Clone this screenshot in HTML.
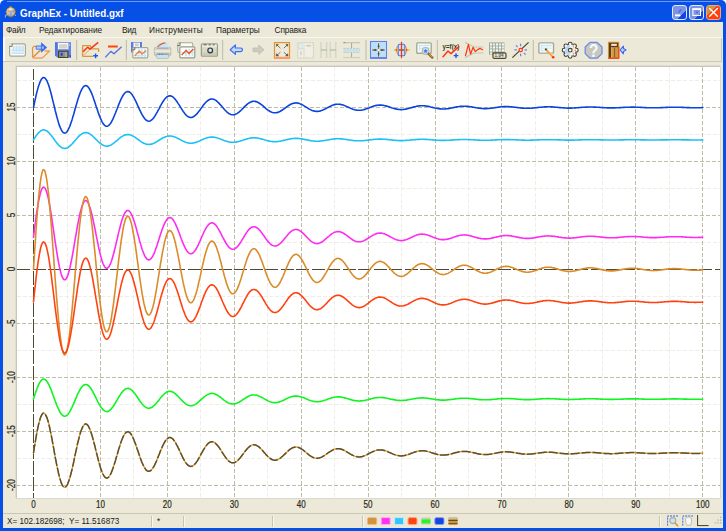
<!DOCTYPE html>
<html><head><meta charset="utf-8"><title>GraphEx - Untitled.gxf</title>
<style>
html,body{margin:0;padding:0;background:#fff;}
body{width:726px;height:531px;position:relative;overflow:hidden;font-family:"Liberation Sans",sans-serif;}
#win{position:absolute;left:0;top:0;width:726px;height:531px;background:#0650e8;border-radius:5px 5px 0 0;overflow:hidden;}
#hl{position:absolute;left:7px;right:7px;top:1px;height:1px;background:#6c9af4;}
#title{position:absolute;left:19.6px;top:5.5px;font-weight:bold;font-size:10.5px;line-height:14px;transform:scaleX(0.935);transform-origin:0 0;color:#fffdf4;white-space:nowrap;}
#client{position:absolute;left:3px;top:22px;width:720px;height:506px;background:#ece9d8;}
#menu span{position:absolute;top:25px;font-size:8.3px;line-height:10px;color:#1a1a1a;white-space:nowrap;}
.hline{position:absolute;left:3px;width:720px;height:1px;}
.btn{position:absolute;top:5px;width:15px;height:15px;border-radius:3px;box-sizing:border-box;}
#status{position:absolute;left:3px;top:513px;width:720px;height:15px;background:#ebe8d7;border-top:1px solid #c9c6b6;box-sizing:border-box;}
#status .t{position:absolute;left:4px;top:3px;font-size:8.15px;line-height:10px;color:#1a1a1a;white-space:pre;}
.sep{position:absolute;top:2px;width:1px;height:11px;background:#c8c5b5;border-right:1px solid #f7f6ef;}
</style></head><body>
<div id="win">
<div id="hl"></div>
<div id="title">GraphEx - Untitled.gxf</div>
<div class="btn" style="left:672px;background:linear-gradient(135deg,#7e92e6 0 66%,#1243e6 66%);border:1px solid #e4e9f6"></div>
<div class="btn" style="left:689px;background:linear-gradient(135deg,#7e92e6 0 66%,#1243e6 66%);border:1px solid #e4e9f6"></div>
<div class="btn" style="left:706px;background:linear-gradient(135deg,#d0943c 0 38%,#ff3f0c 38%);border:1px solid #f6a27c"></div>
<div id="client"></div>
<div id="menu"><span style="left:6px;letter-spacing:-0.25px">Файл</span><span style="left:39px;letter-spacing:0px">Редактирование</span><span style="left:122px;letter-spacing:-0.3px">Вид</span><span style="left:149px;letter-spacing:0.2px">Инструменты</span><span style="left:216px;letter-spacing:-0.05px">Параметры</span><span style="left:274.6px;letter-spacing:-0.15px">Справка</span></div>
<div class="hline" style="top:37px;background:#f8f7f0"></div>
<div class="hline" style="top:61px;background:#cbc8b4;width:719px"></div><div style="position:absolute;left:721px;top:38px;width:1px;height:24px;background:#cbc8b4"></div>

<div style="position:absolute;left:3px;top:38px;width:2px;height:23px;background:#fbfaf6"></div>
<svg id="plot" width="726" height="531" viewBox="0 0 726 531" style="position:absolute;left:0;top:0">
<rect x="16" y="66" width="705" height="433" fill="#dcd9cc"/>
<rect x="15" y="65" width="705" height="433" fill="#e0ddd0"/>
<rect x="16" y="66" width="704" height="432" fill="#c9c6ba"/>
<rect x="17" y="67" width="703" height="431" fill="#fff"/>
<g stroke="#f0ede5" stroke-width="1" stroke-dasharray="4 2" shape-rendering="crispEdges">
<line x1="67.0" y1="67" x2="67.0" y2="498"/>
<line x1="133.9" y1="67" x2="133.9" y2="498"/>
<line x1="200.8" y1="67" x2="200.8" y2="498"/>
<line x1="267.7" y1="67" x2="267.7" y2="498"/>
<line x1="334.6" y1="67" x2="334.6" y2="498"/>
<line x1="401.6" y1="67" x2="401.6" y2="498"/>
<line x1="468.5" y1="67" x2="468.5" y2="498"/>
<line x1="535.4" y1="67" x2="535.4" y2="498"/>
<line x1="602.3" y1="67" x2="602.3" y2="498"/>
<line x1="669.2" y1="67" x2="669.2" y2="498"/>
<line x1="17" y1="458.5" x2="720" y2="458.5"/>
<line x1="17" y1="404.5" x2="720" y2="404.5"/>
<line x1="17" y1="350.5" x2="720" y2="350.5"/>
<line x1="17" y1="296.5" x2="720" y2="296.5"/>
<line x1="17" y1="242.5" x2="720" y2="242.5"/>
<line x1="17" y1="188.5" x2="720" y2="188.5"/>
<line x1="17" y1="134.5" x2="720" y2="134.5"/>
<line x1="17" y1="80.5" x2="720" y2="80.5"/>
</g>
<g stroke="#c0bca6" stroke-width="1" stroke-dasharray="4 2" shape-rendering="crispEdges">
<line x1="100.4" y1="67" x2="100.4" y2="498"/>
<line x1="167.3" y1="67" x2="167.3" y2="498"/>
<line x1="234.3" y1="67" x2="234.3" y2="498"/>
<line x1="301.2" y1="67" x2="301.2" y2="498"/>
<line x1="368.1" y1="67" x2="368.1" y2="498"/>
<line x1="435.0" y1="67" x2="435.0" y2="498"/>
<line x1="501.9" y1="67" x2="501.9" y2="498"/>
<line x1="568.9" y1="67" x2="568.9" y2="498"/>
<line x1="635.8" y1="67" x2="635.8" y2="498"/>
<line x1="702.7" y1="67" x2="702.7" y2="498"/>
<line x1="17" y1="107.5" x2="720" y2="107.5" stroke-dashoffset="1"/>
<line x1="17" y1="161.5" x2="720" y2="161.5" stroke-dashoffset="1"/>
<line x1="17" y1="215.5" x2="720" y2="215.5" stroke-dashoffset="1"/>
<line x1="17" y1="323.5" x2="720" y2="323.5" stroke-dashoffset="1"/>
<line x1="17" y1="377.5" x2="720" y2="377.5" stroke-dashoffset="1"/>
<line x1="17" y1="431.5" x2="720" y2="431.5" stroke-dashoffset="1"/>
<line x1="17" y1="485.5" x2="720" y2="485.5" stroke-dashoffset="1"/>
</g>
<g stroke="#4f4a2c" stroke-width="1" shape-rendering="crispEdges"><line x1="17" y1="269.5" x2="720" y2="269.5" stroke-dasharray="13.3 2.2"/><line x1="33.5" y1="68.5" x2="33.5" y2="498" stroke-dasharray="13.8 2" stroke-dashoffset="2.5"/></g>
<g fill="none" stroke-width="1.6" stroke-linejoin="round" stroke-linecap="round">
<polyline stroke="#0a44dc" points="33.5,107.5 34.3,103.5 35.2,99.6 36.0,95.9 36.8,92.4 37.7,89.1 38.5,86.2 39.4,83.7 40.2,81.6 41.0,79.9 41.9,78.6 42.7,77.8 43.5,77.5 44.4,77.7 45.2,78.3 46.0,79.4 46.9,80.8 47.7,82.7 48.6,85.0 49.4,87.5 50.2,90.4 51.1,93.5 51.9,96.7 52.7,100.1 53.6,103.6 54.4,107.0 55.2,110.5 56.1,113.8 56.9,117.0 57.8,120.1 58.6,122.9 59.4,125.4 60.3,127.6 61.1,129.4 61.9,130.9 62.8,132.1 63.6,132.8 64.5,133.1 65.3,133.0 66.1,132.6 67.0,131.7 67.8,130.5 68.6,128.9 69.5,127.0 70.3,124.9 71.1,122.5 72.0,119.9 72.8,117.1 73.7,114.2 74.5,111.3 75.3,108.3 76.2,105.3 77.0,102.5 77.8,99.7 78.7,97.1 79.5,94.7 80.3,92.5 81.2,90.6 82.0,88.9 82.9,87.6 83.7,86.6 84.5,85.9 85.4,85.6 86.2,85.7 87.0,86.0 87.9,86.7 88.7,87.7 89.5,89.0 90.4,90.6 91.2,92.4 92.1,94.4 92.9,96.6 93.7,99.0 94.6,101.4 95.4,104.0 96.2,106.5 97.1,109.0 97.9,111.5 98.7,113.9 99.6,116.1 100.4,118.2 101.3,120.1 102.1,121.8 102.9,123.2 103.8,124.4 104.6,125.3 105.4,125.9 106.3,126.2 107.1,126.2 107.9,125.9 108.8,125.4 109.6,124.5 110.5,123.5 111.3,122.1 112.1,120.6 113.0,118.9 113.8,117.0 114.6,115.0 115.5,113.0 116.3,110.8 117.2,108.7 118.0,106.5 118.8,104.4 119.7,102.3 120.5,100.4 121.3,98.6 122.2,96.9 123.0,95.5 123.8,94.2 124.7,93.2 125.5,92.4 126.4,91.9 127.2,91.6 128.0,91.5 128.9,91.7 129.7,92.2 130.5,92.8 131.4,93.7 132.2,94.8 133.0,96.1 133.9,97.5 134.7,99.1 135.6,100.8 136.4,102.6 137.2,104.4 138.1,106.3 138.9,108.1 139.7,109.9 140.6,111.7 141.4,113.4 142.2,114.9 143.1,116.3 143.9,117.6 144.8,118.7 145.6,119.6 146.4,120.3 147.3,120.8 148.1,121.1 148.9,121.2 149.8,121.0 150.6,120.7 151.4,120.1 152.3,119.4 153.1,118.5 154.0,117.4 154.8,116.2 155.6,114.8 156.5,113.4 157.3,111.9 158.1,110.3 159.0,108.8 159.8,107.2 160.6,105.6 161.5,104.1 162.3,102.7 163.2,101.3 164.0,100.1 164.8,99.0 165.7,98.0 166.5,97.2 167.3,96.6 168.2,96.2 169.0,95.9 169.8,95.8 170.7,95.9 171.5,96.2 172.4,96.6 173.2,97.2 174.0,98.0 174.9,98.9 175.7,99.9 176.5,101.1 177.4,102.3 178.2,103.6 179.1,104.9 179.9,106.2 180.7,107.6 181.6,108.9 182.4,110.2 183.2,111.5 184.1,112.6 184.9,113.7 185.7,114.6 186.6,115.5 187.4,116.2 188.3,116.7 189.1,117.1 189.9,117.4 190.8,117.5 191.6,117.4 192.4,117.2 193.3,116.8 194.1,116.3 194.9,115.7 195.8,114.9 196.6,114.1 197.5,113.1 198.3,112.1 199.1,111.0 200.0,109.9 200.8,108.7 201.6,107.6 202.5,106.4 203.3,105.3 204.1,104.2 205.0,103.2 205.8,102.3 206.7,101.5 207.5,100.8 208.3,100.2 209.2,99.7 210.0,99.3 210.8,99.1 211.7,99.0 212.5,99.0 213.3,99.2 214.2,99.5 215.0,99.9 215.9,100.4 216.7,101.0 217.5,101.8 218.4,102.6 219.2,103.4 220.0,104.4 220.9,105.3 221.7,106.3 222.5,107.3 223.4,108.3 224.2,109.2 225.1,110.2 225.9,111.0 226.7,111.8 227.6,112.5 228.4,113.2 229.2,113.7 230.1,114.1 230.9,114.5 231.8,114.7 232.6,114.8 233.4,114.8 234.3,114.6 235.1,114.4 235.9,114.1 236.8,113.6 237.6,113.1 238.4,112.5 239.3,111.8 240.1,111.1 241.0,110.3 241.8,109.5 242.6,108.6 243.5,107.8 244.3,106.9 245.1,106.1 246.0,105.3 246.8,104.6 247.6,103.9 248.5,103.3 249.3,102.7 250.2,102.2 251.0,101.9 251.8,101.6 252.7,101.4 253.5,101.3 254.3,101.3 255.2,101.4 256.0,101.6 256.8,101.8 257.7,102.2 258.5,102.7 259.4,103.2 260.2,103.7 261.0,104.4 261.9,105.0 262.7,105.7 263.5,106.4 264.4,107.2 265.2,107.9 266.0,108.6 266.9,109.3 267.7,109.9 268.6,110.5 269.4,111.0 270.2,111.5 271.1,111.9 271.9,112.3 272.7,112.5 273.6,112.7 274.4,112.8 275.2,112.8 276.1,112.8 276.9,112.6 277.8,112.4 278.6,112.1 279.4,111.7 280.3,111.3 281.1,110.8 281.9,110.2 282.8,109.7 283.6,109.1 284.5,108.5 285.3,107.9 286.1,107.3 287.0,106.6 287.8,106.1 288.6,105.5 289.5,105.0 290.3,104.5 291.1,104.1 292.0,103.7 292.8,103.4 293.7,103.2 294.5,103.1 295.3,103.0 296.2,102.9 297.0,103.0 297.8,103.1 298.7,103.3 299.5,103.6 300.3,103.9 301.2,104.2 302.0,104.6 302.9,105.1 303.7,105.6 304.5,106.1 305.4,106.6 306.2,107.1 307.0,107.6 307.9,108.2 308.7,108.7 309.5,109.1 310.4,109.6 311.2,110.0 312.1,110.4 312.9,110.7 313.7,110.9 314.6,111.1 315.4,111.3 316.2,111.4 317.1,111.4 317.9,111.4 318.7,111.3 319.6,111.1 320.4,110.9 321.3,110.6 322.1,110.3 322.9,110.0 323.8,109.6 324.6,109.2 325.4,108.8 326.3,108.3 327.1,107.9 327.9,107.4 328.8,107.0 329.6,106.6 330.5,106.2 331.3,105.8 332.1,105.4 333.0,105.1 333.8,104.8 334.6,104.6 335.5,104.4 336.3,104.3 337.1,104.2 338.0,104.2 338.8,104.2 339.7,104.3 340.5,104.4 341.3,104.6 342.2,104.8 343.0,105.0 343.8,105.3 344.7,105.6 345.5,106.0 346.4,106.4 347.2,106.7 348.0,107.1 348.9,107.5 349.7,107.9 350.5,108.3 351.4,108.6 352.2,108.9 353.0,109.2 353.9,109.5 354.7,109.8 355.6,110.0 356.4,110.1 357.2,110.2 358.1,110.3 358.9,110.3 359.7,110.3 360.6,110.3 361.4,110.2 362.2,110.0 363.1,109.8 363.9,109.6 364.8,109.4 365.6,109.1 366.4,108.8 367.3,108.5 368.1,108.2 368.9,107.9 369.8,107.5 370.6,107.2 371.4,106.9 372.3,106.6 373.1,106.3 374.0,106.0 374.8,105.8 375.6,105.6 376.5,105.4 377.3,105.3 378.1,105.2 379.0,105.1 379.8,105.1 380.6,105.1 381.5,105.1 382.3,105.2 383.2,105.3 384.0,105.5 384.8,105.7 385.7,105.9 386.5,106.1 387.3,106.3 388.2,106.6 389.0,106.9 389.8,107.1 390.7,107.4 391.5,107.7 392.4,108.0 393.2,108.2 394.0,108.5 394.9,108.7 395.7,108.9 396.5,109.1 397.4,109.3 398.2,109.4 399.1,109.5 399.9,109.5 400.7,109.6 401.6,109.6 402.4,109.5 403.2,109.5 404.1,109.4 404.9,109.3 405.7,109.1 406.6,108.9 407.4,108.7 408.3,108.5 409.1,108.3 409.9,108.1 410.8,107.8 411.6,107.6 412.4,107.4 413.3,107.1 414.1,106.9 414.9,106.7 415.8,106.5 416.6,106.3 417.5,106.1 418.3,106.0 419.1,105.9 420.0,105.8 420.8,105.8 421.6,105.7 422.5,105.7 423.3,105.8 424.1,105.8 425.0,105.9 425.8,106.0 426.7,106.1 427.5,106.3 428.3,106.4 429.2,106.6 430.0,106.8 430.8,107.0 431.7,107.2 432.5,107.4 433.3,107.6 434.2,107.8 435.0,108.0 435.9,108.2 436.7,108.3 437.5,108.5 438.4,108.6 439.2,108.8 440.0,108.9 440.9,108.9 441.7,109.0 442.5,109.0 443.4,109.0 444.2,109.0 445.1,109.0 445.9,108.9 446.7,108.8 447.6,108.7 448.4,108.6 449.2,108.4 450.1,108.3 450.9,108.1 451.8,108.0 452.6,107.8 453.4,107.6 454.3,107.4 455.1,107.3 455.9,107.1 456.8,106.9 457.6,106.8 458.4,106.7 459.3,106.5 460.1,106.4 461.0,106.4 461.8,106.3 462.6,106.2 463.5,106.2 464.3,106.2 465.1,106.2 466.0,106.3 466.8,106.3 467.6,106.4 468.5,106.5 469.3,106.6 470.2,106.7 471.0,106.8 471.8,106.9 472.7,107.1 473.5,107.2 474.3,107.4 475.2,107.5 476.0,107.7 476.8,107.8 477.7,108.0 478.5,108.1 479.4,108.2 480.2,108.3 481.0,108.4 481.9,108.5 482.7,108.5 483.5,108.6 484.4,108.6 485.2,108.6 486.0,108.6 486.9,108.6 487.7,108.5 488.6,108.5 489.4,108.4 490.2,108.3 491.1,108.2 491.9,108.1 492.7,108.0 493.6,107.9 494.4,107.7 495.2,107.6 496.1,107.5 496.9,107.4 497.8,107.2 498.6,107.1 499.4,107.0 500.3,106.9 501.1,106.8 501.9,106.7 502.8,106.7 503.6,106.6 504.4,106.6 505.3,106.6 506.1,106.6 507.0,106.6 507.8,106.6 508.6,106.6 509.5,106.7 510.3,106.7 511.1,106.8 512.0,106.9 512.8,107.0 513.7,107.1 514.5,107.2 515.3,107.3 516.2,107.4 517.0,107.5 517.8,107.6 518.7,107.7 519.5,107.8 520.3,107.9 521.2,108.0 522.0,108.1 522.9,108.1 523.7,108.2 524.5,108.2 525.4,108.3 526.2,108.3 527.0,108.3 527.9,108.3 528.7,108.3 529.5,108.3 530.4,108.2 531.2,108.2 532.1,108.1 532.9,108.0 533.7,108.0 534.6,107.9 535.4,107.8 536.2,107.7 537.1,107.6 537.9,107.5 538.7,107.4 539.6,107.3 540.4,107.2 541.3,107.2 542.1,107.1 542.9,107.0 543.8,107.0 544.6,106.9 545.4,106.9 546.3,106.8 547.1,106.8 547.9,106.8 548.8,106.8 549.6,106.8 550.5,106.8 551.3,106.9 552.1,106.9 553.0,107.0 553.8,107.0 554.6,107.1 555.5,107.2 556.3,107.2 557.1,107.3 558.0,107.4 558.8,107.5 559.7,107.6 560.5,107.6 561.3,107.7 562.2,107.8 563.0,107.8 563.8,107.9 564.7,108.0 565.5,108.0 566.4,108.0 567.2,108.1 568.0,108.1 568.9,108.1 569.7,108.1 570.5,108.1 571.4,108.1 572.2,108.0 573.0,108.0 573.9,108.0 574.7,107.9 575.6,107.9 576.4,107.8 577.2,107.7 578.1,107.7 578.9,107.6 579.7,107.5 580.6,107.5 581.4,107.4 582.2,107.3 583.1,107.3 583.9,107.2 584.8,107.2 585.6,107.1 586.4,107.1 587.3,107.0 588.1,107.0 588.9,107.0 589.8,107.0 590.6,107.0 591.4,107.0 592.3,107.0 593.1,107.0 594.0,107.1 594.8,107.1 595.6,107.1 596.5,107.2 597.3,107.2 598.1,107.3 599.0,107.3 599.8,107.4 600.6,107.5 601.5,107.5 602.3,107.6 603.2,107.6 604.0,107.7 604.8,107.7 605.7,107.8 606.5,107.8 607.3,107.9 608.2,107.9 609.0,107.9 609.8,107.9 610.7,107.9 611.5,107.9 612.4,107.9 613.2,107.9 614.0,107.9 614.9,107.9 615.7,107.8 616.5,107.8 617.4,107.8 618.2,107.7 619.1,107.7 619.9,107.6 620.7,107.6 621.6,107.5 622.4,107.5 623.2,107.4 624.1,107.4 624.9,107.3 625.7,107.3 626.6,107.3 627.4,107.2 628.3,107.2 629.1,107.2 629.9,107.2 630.8,107.1 631.6,107.1 632.4,107.1 633.3,107.1 634.1,107.1 634.9,107.2 635.8,107.2 636.6,107.2 637.5,107.2 638.3,107.3 639.1,107.3 640.0,107.3 640.8,107.4 641.6,107.4 642.5,107.5 643.3,107.5 644.1,107.5 645.0,107.6 645.8,107.6 646.7,107.7 647.5,107.7 648.3,107.7 649.2,107.8 650.0,107.8 650.8,107.8 651.7,107.8 652.5,107.8 653.3,107.8 654.2,107.8 655.0,107.8 655.9,107.8 656.7,107.8 657.5,107.8 658.4,107.7 659.2,107.7 660.0,107.7 660.9,107.6 661.7,107.6 662.5,107.6 663.4,107.5 664.2,107.5 665.1,107.5 665.9,107.4 666.7,107.4 667.6,107.4 668.4,107.3 669.2,107.3 670.1,107.3 670.9,107.3 671.7,107.3 672.6,107.2 673.4,107.2 674.3,107.2 675.1,107.2 675.9,107.2 676.8,107.2 677.6,107.3 678.4,107.3 679.3,107.3 680.1,107.3 681.0,107.3 681.8,107.4 682.6,107.4 683.5,107.4 684.3,107.5 685.1,107.5 686.0,107.5 686.8,107.6 687.6,107.6 688.5,107.6 689.3,107.6 690.2,107.7 691.0,107.7 691.8,107.7 692.7,107.7 693.5,107.7 694.3,107.7 695.2,107.7 696.0,107.7 696.8,107.7 697.7,107.7 698.5,107.7 699.4,107.7 700.2,107.7 701.0,107.7 701.9,107.6 702.7,107.6"/>
<polyline stroke="#1ec0f8" points="33.5,139.9 34.3,138.6 35.2,137.3 36.0,136.0 36.8,134.9 37.7,133.8 38.5,132.8 39.4,132.0 40.2,131.3 41.0,130.7 41.9,130.3 42.7,130.0 43.5,129.9 44.4,130.0 45.2,130.2 46.0,130.5 46.9,131.0 47.7,131.6 48.6,132.4 49.4,133.2 50.2,134.2 51.1,135.2 51.9,136.3 52.7,137.4 53.6,138.6 54.4,139.7 55.2,140.9 56.1,142.0 56.9,143.1 57.8,144.1 58.6,145.0 59.4,145.9 60.3,146.6 61.1,147.2 61.9,147.7 62.8,148.1 63.6,148.3 64.5,148.4 65.3,148.4 66.1,148.3 67.0,148.0 67.8,147.6 68.6,147.0 69.5,146.4 70.3,145.7 71.1,144.9 72.0,144.0 72.8,143.1 73.7,142.1 74.5,141.2 75.3,140.2 76.2,139.2 77.0,138.2 77.8,137.3 78.7,136.4 79.5,135.6 80.3,134.9 81.2,134.3 82.0,133.7 82.9,133.3 83.7,132.9 84.5,132.7 85.4,132.6 86.2,132.6 87.0,132.7 87.9,133.0 88.7,133.3 89.5,133.7 90.4,134.3 91.2,134.9 92.1,135.5 92.9,136.3 93.7,137.1 94.6,137.9 95.4,138.7 96.2,139.6 97.1,140.4 97.9,141.2 98.7,142.0 99.6,142.8 100.4,143.5 101.3,144.1 102.1,144.7 102.9,145.1 103.8,145.5 104.6,145.8 105.4,146.0 106.3,146.1 107.1,146.1 107.9,146.0 108.8,145.9 109.6,145.6 110.5,145.2 111.3,144.8 112.1,144.3 113.0,143.7 113.8,143.1 114.6,142.4 115.5,141.7 116.3,141.0 117.2,140.3 118.0,139.6 118.8,138.9 119.7,138.2 120.5,137.5 121.3,136.9 122.2,136.4 123.0,135.9 123.8,135.5 124.7,135.1 125.5,134.9 126.4,134.7 127.2,134.6 128.0,134.6 128.9,134.6 129.7,134.8 130.5,135.0 131.4,135.3 132.2,135.7 133.0,136.1 133.9,136.6 134.7,137.1 135.6,137.7 136.4,138.3 137.2,138.9 138.1,139.5 138.9,140.1 139.7,140.7 140.6,141.3 141.4,141.9 142.2,142.4 143.1,142.8 143.9,143.3 144.8,143.6 145.6,143.9 146.4,144.2 147.3,144.3 148.1,144.4 148.9,144.5 149.8,144.4 150.6,144.3 151.4,144.1 152.3,143.9 153.1,143.6 154.0,143.2 154.8,142.8 155.6,142.3 156.5,141.9 157.3,141.4 158.1,140.8 159.0,140.3 159.8,139.8 160.6,139.3 161.5,138.8 162.3,138.3 163.2,137.8 164.0,137.4 164.8,137.1 165.7,136.7 166.5,136.5 167.3,136.3 168.2,136.1 169.0,136.0 169.8,136.0 170.7,136.0 171.5,136.1 172.4,136.3 173.2,136.5 174.0,136.7 174.9,137.0 175.7,137.4 176.5,137.8 177.4,138.2 178.2,138.6 179.1,139.0 179.9,139.5 180.7,139.9 181.6,140.4 182.4,140.8 183.2,141.2 184.1,141.6 184.9,142.0 185.7,142.3 186.6,142.6 187.4,142.8 188.3,143.0 189.1,143.1 189.9,143.2 190.8,143.2 191.6,143.2 192.4,143.1 193.3,143.0 194.1,142.8 194.9,142.6 195.8,142.4 196.6,142.1 197.5,141.8 198.3,141.4 199.1,141.1 200.0,140.7 200.8,140.3 201.6,139.9 202.5,139.5 203.3,139.2 204.1,138.8 205.0,138.5 205.8,138.2 206.7,137.9 207.5,137.7 208.3,137.5 209.2,137.3 210.0,137.2 210.8,137.1 211.7,137.1 212.5,137.1 213.3,137.1 214.2,137.2 215.0,137.4 215.9,137.5 216.7,137.7 217.5,138.0 218.4,138.3 219.2,138.5 220.0,138.9 220.9,139.2 221.7,139.5 222.5,139.8 223.4,140.2 224.2,140.5 225.1,140.8 225.9,141.1 226.7,141.3 227.6,141.6 228.4,141.8 229.2,142.0 230.1,142.1 230.9,142.2 231.8,142.3 232.6,142.3 233.4,142.3 234.3,142.3 235.1,142.2 235.9,142.1 236.8,141.9 237.6,141.8 238.4,141.6 239.3,141.3 240.1,141.1 241.0,140.8 241.8,140.6 242.6,140.3 243.5,140.0 244.3,139.7 245.1,139.4 246.0,139.2 246.8,138.9 247.6,138.7 248.5,138.5 249.3,138.3 250.2,138.1 251.0,138.0 251.8,137.9 252.7,137.9 253.5,137.8 254.3,137.8 255.2,137.9 256.0,137.9 256.8,138.0 257.7,138.1 258.5,138.3 259.4,138.5 260.2,138.6 261.0,138.9 261.9,139.1 262.7,139.3 263.5,139.5 264.4,139.8 265.2,140.0 266.0,140.3 266.9,140.5 267.7,140.7 268.6,140.9 269.4,141.1 270.2,141.2 271.1,141.4 271.9,141.5 272.7,141.6 273.6,141.6 274.4,141.7 275.2,141.7 276.1,141.7 276.9,141.6 277.8,141.5 278.6,141.4 279.4,141.3 280.3,141.2 281.1,141.0 281.9,140.8 282.8,140.6 283.6,140.4 284.5,140.2 285.3,140.0 286.1,139.8 287.0,139.6 287.8,139.4 288.6,139.2 289.5,139.1 290.3,138.9 291.1,138.8 292.0,138.6 292.8,138.5 293.7,138.5 294.5,138.4 295.3,138.4 296.2,138.4 297.0,138.4 297.8,138.4 298.7,138.5 299.5,138.6 300.3,138.7 301.2,138.8 302.0,138.9 302.9,139.1 303.7,139.3 304.5,139.4 305.4,139.6 306.2,139.8 307.0,139.9 307.9,140.1 308.7,140.3 309.5,140.4 310.4,140.6 311.2,140.7 312.1,140.9 312.9,141.0 313.7,141.0 314.6,141.1 315.4,141.2 316.2,141.2 317.1,141.2 317.9,141.2 318.7,141.2 319.6,141.1 320.4,141.0 321.3,140.9 322.1,140.8 322.9,140.7 323.8,140.6 324.6,140.5 325.4,140.3 326.3,140.2 327.1,140.0 327.9,139.9 328.8,139.7 329.6,139.6 330.5,139.5 331.3,139.3 332.1,139.2 333.0,139.1 333.8,139.0 334.6,138.9 335.5,138.9 336.3,138.8 337.1,138.8 338.0,138.8 338.8,138.8 339.7,138.8 340.5,138.9 341.3,138.9 342.2,139.0 343.0,139.1 343.8,139.2 344.7,139.3 345.5,139.4 346.4,139.5 347.2,139.6 348.0,139.8 348.9,139.9 349.7,140.0 350.5,140.2 351.4,140.3 352.2,140.4 353.0,140.5 353.9,140.6 354.7,140.7 355.6,140.7 356.4,140.8 357.2,140.8 358.1,140.8 358.9,140.8 359.7,140.8 360.6,140.8 361.4,140.8 362.2,140.7 363.1,140.7 363.9,140.6 364.8,140.5 365.6,140.4 366.4,140.3 367.3,140.2 368.1,140.1 368.9,140.0 369.8,139.9 370.6,139.8 371.4,139.7 372.3,139.6 373.1,139.5 374.0,139.4 374.8,139.3 375.6,139.3 376.5,139.2 377.3,139.2 378.1,139.1 379.0,139.1 379.8,139.1 380.6,139.1 381.5,139.1 382.3,139.1 383.2,139.2 384.0,139.2 384.8,139.3 385.7,139.4 386.5,139.4 387.3,139.5 388.2,139.6 389.0,139.7 389.8,139.8 390.7,139.9 391.5,140.0 392.4,140.1 393.2,140.1 394.0,140.2 394.9,140.3 395.7,140.4 396.5,140.4 397.4,140.5 398.2,140.5 399.1,140.6 399.9,140.6 400.7,140.6 401.6,140.6 402.4,140.6 403.2,140.6 404.1,140.5 404.9,140.5 405.7,140.4 406.6,140.4 407.4,140.3 408.3,140.2 409.1,140.2 409.9,140.1 410.8,140.0 411.6,139.9 412.4,139.9 413.3,139.8 414.1,139.7 414.9,139.6 415.8,139.6 416.6,139.5 417.5,139.4 418.3,139.4 419.1,139.4 420.0,139.3 420.8,139.3 421.6,139.3 422.5,139.3 423.3,139.3 424.1,139.3 425.0,139.4 425.8,139.4 426.7,139.4 427.5,139.5 428.3,139.5 429.2,139.6 430.0,139.7 430.8,139.7 431.7,139.8 432.5,139.9 433.3,139.9 434.2,140.0 435.0,140.1 435.9,140.1 436.7,140.2 437.5,140.2 438.4,140.3 439.2,140.3 440.0,140.4 440.9,140.4 441.7,140.4 442.5,140.4 443.4,140.4 444.2,140.4 445.1,140.4 445.9,140.4 446.7,140.3 447.6,140.3 448.4,140.3 449.2,140.2 450.1,140.2 450.9,140.1 451.8,140.1 452.6,140.0 453.4,139.9 454.3,139.9 455.1,139.8 455.9,139.8 456.8,139.7 457.6,139.7 458.4,139.6 459.3,139.6 460.1,139.5 461.0,139.5 461.8,139.5 462.6,139.5 463.5,139.5 464.3,139.5 465.1,139.5 466.0,139.5 466.8,139.5 467.6,139.5 468.5,139.6 469.3,139.6 470.2,139.6 471.0,139.7 471.8,139.7 472.7,139.8 473.5,139.8 474.3,139.9 475.2,139.9 476.0,140.0 476.8,140.0 477.7,140.1 478.5,140.1 479.4,140.1 480.2,140.2 481.0,140.2 481.9,140.2 482.7,140.2 483.5,140.3 484.4,140.3 485.2,140.3 486.0,140.3 486.9,140.3 487.7,140.2 488.6,140.2 489.4,140.2 490.2,140.2 491.1,140.1 491.9,140.1 492.7,140.1 493.6,140.0 494.4,140.0 495.2,139.9 496.1,139.9 496.9,139.9 497.8,139.8 498.6,139.8 499.4,139.7 500.3,139.7 501.1,139.7 501.9,139.6 502.8,139.6 503.6,139.6 504.4,139.6 505.3,139.6 506.1,139.6 507.0,139.6 507.8,139.6 508.6,139.6 509.5,139.6 510.3,139.6 511.1,139.7 512.0,139.7 512.8,139.7 513.7,139.8 514.5,139.8 515.3,139.8 516.2,139.9 517.0,139.9 517.8,139.9 518.7,140.0 519.5,140.0 520.3,140.0 521.2,140.1 522.0,140.1 522.9,140.1 523.7,140.1 524.5,140.1 525.4,140.2 526.2,140.2 527.0,140.2 527.9,140.2 528.7,140.2 529.5,140.2 530.4,140.1 531.2,140.1 532.1,140.1 532.9,140.1 533.7,140.1 534.6,140.0 535.4,140.0 536.2,140.0 537.1,139.9 537.9,139.9 538.7,139.9 539.6,139.8 540.4,139.8 541.3,139.8 542.1,139.8 542.9,139.7 543.8,139.7 544.6,139.7 545.4,139.7 546.3,139.7 547.1,139.7 547.9,139.7 548.8,139.7 549.6,139.7 550.5,139.7 551.3,139.7 552.1,139.7 553.0,139.7 553.8,139.7 554.6,139.8 555.5,139.8 556.3,139.8 557.1,139.8 558.0,139.9 558.8,139.9 559.7,139.9 560.5,139.9 561.3,140.0 562.2,140.0 563.0,140.0 563.8,140.0 564.7,140.1 565.5,140.1 566.4,140.1 567.2,140.1 568.0,140.1 568.9,140.1 569.7,140.1 570.5,140.1 571.4,140.1 572.2,140.1 573.0,140.1 573.9,140.1 574.7,140.0 575.6,140.0 576.4,140.0 577.2,140.0 578.1,140.0 578.9,139.9 579.7,139.9 580.6,139.9 581.4,139.9 582.2,139.8 583.1,139.8 583.9,139.8 584.8,139.8 585.6,139.8 586.4,139.8 587.3,139.7 588.1,139.7 588.9,139.7 589.8,139.7 590.6,139.7 591.4,139.7 592.3,139.7 593.1,139.7 594.0,139.8 594.8,139.8 595.6,139.8 596.5,139.8 597.3,139.8 598.1,139.8 599.0,139.8 599.8,139.9 600.6,139.9 601.5,139.9 602.3,139.9 603.2,139.9 604.0,140.0 604.8,140.0 605.7,140.0 606.5,140.0 607.3,140.0 608.2,140.0 609.0,140.0 609.8,140.0 610.7,140.0 611.5,140.0 612.4,140.0 613.2,140.0 614.0,140.0 614.9,140.0 615.7,140.0 616.5,140.0 617.4,140.0 618.2,140.0 619.1,140.0 619.9,139.9 620.7,139.9 621.6,139.9 622.4,139.9 623.2,139.9 624.1,139.9 624.9,139.8 625.7,139.8 626.6,139.8 627.4,139.8 628.3,139.8 629.1,139.8 629.9,139.8 630.8,139.8 631.6,139.8 632.4,139.8 633.3,139.8 634.1,139.8 634.9,139.8 635.8,139.8 636.6,139.8 637.5,139.8 638.3,139.8 639.1,139.8 640.0,139.8 640.8,139.9 641.6,139.9 642.5,139.9 643.3,139.9 644.1,139.9 645.0,139.9 645.8,139.9 646.7,140.0 647.5,140.0 648.3,140.0 649.2,140.0 650.0,140.0 650.8,140.0 651.7,140.0 652.5,140.0 653.3,140.0 654.2,140.0 655.0,140.0 655.9,140.0 656.7,140.0 657.5,140.0 658.4,140.0 659.2,140.0 660.0,140.0 660.9,139.9 661.7,139.9 662.5,139.9 663.4,139.9 664.2,139.9 665.1,139.9 665.9,139.9 666.7,139.9 667.6,139.9 668.4,139.8 669.2,139.8 670.1,139.8 670.9,139.8 671.7,139.8 672.6,139.8 673.4,139.8 674.3,139.8 675.1,139.8 675.9,139.8 676.8,139.8 677.6,139.8 678.4,139.8 679.3,139.8 680.1,139.8 681.0,139.8 681.8,139.9 682.6,139.9 683.5,139.9 684.3,139.9 685.1,139.9 686.0,139.9 686.8,139.9 687.6,139.9 688.5,139.9 689.3,139.9 690.2,140.0 691.0,140.0 691.8,140.0 692.7,140.0 693.5,140.0 694.3,140.0 695.2,140.0 696.0,140.0 696.8,140.0 697.7,140.0 698.5,140.0 699.4,140.0 700.2,140.0 701.0,140.0 701.9,139.9 702.7,139.9"/>
<polyline stroke="#ff2cf0" points="33.5,237.1 34.3,230.4 35.2,223.9 36.0,217.7 36.8,211.9 37.7,206.5 38.5,201.6 39.4,197.4 40.2,193.9 41.0,191.0 41.9,189.0 42.7,187.7 43.5,187.1 44.4,187.4 45.2,188.4 46.0,190.2 46.9,192.7 47.7,195.8 48.6,199.6 49.4,203.8 50.2,208.6 51.1,213.7 51.9,219.1 52.7,224.8 53.6,230.5 54.4,236.3 55.2,242.1 56.1,247.7 56.9,253.0 57.8,258.0 58.6,262.7 59.4,266.9 60.3,270.6 61.1,273.7 61.9,276.2 62.8,278.0 63.6,279.3 64.5,279.8 65.3,279.7 66.1,278.9 67.0,277.4 67.8,275.4 68.6,272.8 69.5,269.6 70.3,266.0 71.1,262.0 72.0,257.7 72.8,253.1 73.7,248.3 74.5,243.4 75.3,238.4 76.2,233.5 77.0,228.7 77.8,224.1 78.7,219.8 79.5,215.7 80.3,212.1 81.2,208.9 82.0,206.2 82.9,204.0 83.7,202.3 84.5,201.2 85.4,200.6 86.2,200.7 87.0,201.3 87.9,202.4 88.7,204.1 89.5,206.3 90.4,208.9 91.2,211.9 92.1,215.3 92.9,219.0 93.7,222.9 94.6,227.0 95.4,231.2 96.2,235.4 97.1,239.6 97.9,243.7 98.7,247.7 99.6,251.4 100.4,254.9 101.3,258.1 102.1,260.9 102.9,263.3 103.8,265.2 104.6,266.7 105.4,267.7 106.3,268.2 107.1,268.3 107.9,267.8 108.8,266.9 109.6,265.5 110.5,263.7 111.3,261.5 112.1,259.0 113.0,256.1 113.8,253.0 114.6,249.7 115.5,246.2 116.3,242.6 117.2,239.0 118.0,235.4 118.8,231.9 119.7,228.5 120.5,225.3 121.3,222.3 122.2,219.5 123.0,217.1 123.8,215.0 124.7,213.3 125.5,212.0 126.4,211.0 127.2,210.5 128.0,210.5 128.9,210.8 129.7,211.5 130.5,212.6 131.4,214.1 132.2,216.0 133.0,218.1 133.9,220.5 134.7,223.1 135.6,226.0 136.4,228.9 137.2,232.0 138.1,235.1 138.9,238.1 139.7,241.2 140.6,244.1 141.4,246.9 142.2,249.5 143.1,251.8 143.9,253.9 144.8,255.8 145.6,257.3 146.4,258.5 147.3,259.3 148.1,259.8 148.9,259.9 149.8,259.6 150.6,259.1 151.4,258.1 152.3,256.9 153.1,255.4 154.0,253.6 154.8,251.6 155.6,249.3 156.5,246.9 157.3,244.4 158.1,241.8 159.0,239.2 159.8,236.6 160.6,234.0 161.5,231.5 162.3,229.1 163.2,226.8 164.0,224.8 164.8,222.9 165.7,221.3 166.5,220.0 167.3,219.0 168.2,218.2 169.0,217.8 169.8,217.6 170.7,217.8 171.5,218.2 172.4,219.0 173.2,220.0 174.0,221.3 174.9,222.8 175.7,224.5 176.5,226.4 177.4,228.4 178.2,230.5 179.1,232.8 179.9,235.0 180.7,237.3 181.6,239.5 182.4,241.6 183.2,243.7 184.1,245.6 184.9,247.4 185.7,249.0 186.6,250.4 187.4,251.6 188.3,252.5 189.1,253.2 189.9,253.6 190.8,253.7 191.6,253.6 192.4,253.3 193.3,252.7 194.1,251.8 194.9,250.8 195.8,249.5 196.6,248.1 197.5,246.5 198.3,244.8 199.1,243.0 200.0,241.1 200.8,239.1 201.6,237.2 202.5,235.3 203.3,233.5 204.1,231.7 205.0,230.0 205.8,228.5 206.7,227.1 207.5,225.9 208.3,224.9 209.2,224.0 210.0,223.4 210.8,223.0 211.7,222.9 212.5,222.9 213.3,223.2 214.2,223.7 215.0,224.4 215.9,225.3 216.7,226.3 217.5,227.6 218.4,228.9 219.2,230.3 220.0,231.9 220.9,233.5 221.7,235.1 222.5,236.8 223.4,238.4 224.2,240.0 225.1,241.5 225.9,243.0 226.7,244.3 227.6,245.5 228.4,246.6 229.2,247.5 230.1,248.2 230.9,248.7 231.8,249.1 232.6,249.2 233.4,249.2 234.3,249.0 235.1,248.6 235.9,248.0 236.8,247.3 237.6,246.4 238.4,245.4 239.3,244.3 240.1,243.0 241.0,241.7 241.8,240.4 242.6,239.0 243.5,237.6 244.3,236.2 245.1,234.8 246.0,233.5 246.8,232.2 247.6,231.1 248.5,230.0 249.3,229.1 250.2,228.3 251.0,227.7 251.8,227.2 252.7,226.9 253.5,226.7 254.3,226.7 255.2,226.9 256.0,227.2 256.8,227.7 257.7,228.3 258.5,229.0 259.4,229.9 260.2,230.8 261.0,231.9 261.9,233.0 262.7,234.2 263.5,235.3 264.4,236.5 265.2,237.7 266.0,238.9 266.9,240.0 267.7,241.1 268.6,242.1 269.4,243.0 270.2,243.8 271.1,244.5 271.9,245.1 272.7,245.5 273.6,245.8 274.4,246.0 275.2,246.0 276.1,245.9 276.9,245.6 277.8,245.2 278.6,244.7 279.4,244.1 280.3,243.4 281.1,242.6 281.9,241.7 282.8,240.7 283.6,239.8 284.5,238.7 285.3,237.7 286.1,236.7 287.0,235.7 287.8,234.7 288.6,233.8 289.5,232.9 290.3,232.1 291.1,231.4 292.0,230.8 292.8,230.3 293.7,230.0 294.5,229.7 295.3,229.5 296.2,229.5 297.0,229.6 297.8,229.8 298.7,230.1 299.5,230.5 300.3,231.1 301.2,231.7 302.0,232.3 302.9,233.1 303.7,233.9 304.5,234.7 305.4,235.6 306.2,236.5 307.0,237.3 307.9,238.2 308.7,239.0 309.5,239.8 310.4,240.6 311.2,241.3 312.1,241.9 312.9,242.4 313.7,242.8 314.6,243.2 315.4,243.4 316.2,243.5 317.1,243.6 317.9,243.5 318.7,243.4 319.6,243.1 320.4,242.8 321.3,242.3 322.1,241.8 322.9,241.3 323.8,240.6 324.6,239.9 325.4,239.2 326.3,238.5 327.1,237.7 327.9,237.0 328.8,236.3 329.6,235.5 330.5,234.9 331.3,234.2 332.1,233.6 333.0,233.1 333.8,232.6 334.6,232.3 335.5,232.0 336.3,231.7 337.1,231.6 338.0,231.6 338.8,231.6 339.7,231.7 340.5,231.9 341.3,232.2 342.2,232.6 343.0,233.0 343.8,233.5 344.7,234.0 345.5,234.6 346.4,235.2 347.2,235.8 348.0,236.5 348.9,237.1 349.7,237.7 350.5,238.4 351.4,238.9 352.2,239.5 353.0,240.0 353.9,240.5 354.7,240.9 355.6,241.2 356.4,241.5 357.2,241.7 358.1,241.8 358.9,241.8 359.7,241.8 360.6,241.7 361.4,241.5 362.2,241.3 363.1,241.0 363.9,240.7 364.8,240.2 365.6,239.8 366.4,239.3 367.3,238.8 368.1,238.3 368.9,237.7 369.8,237.2 370.6,236.6 371.4,236.1 372.3,235.6 373.1,235.1 374.0,234.7 374.8,234.3 375.6,233.9 376.5,233.6 377.3,233.4 378.1,233.2 379.0,233.1 379.8,233.1 380.6,233.1 381.5,233.1 382.3,233.3 383.2,233.5 384.0,233.7 384.8,234.0 385.7,234.4 386.5,234.7 387.3,235.2 388.2,235.6 389.0,236.0 389.8,236.5 390.7,237.0 391.5,237.4 392.4,237.9 393.2,238.3 394.0,238.7 394.9,239.1 395.7,239.5 396.5,239.8 397.4,240.0 398.2,240.2 399.1,240.4 399.9,240.5 400.7,240.6 401.6,240.6 402.4,240.5 403.2,240.4 404.1,240.2 404.9,240.0 405.7,239.8 406.6,239.5 407.4,239.2 408.3,238.8 409.1,238.4 409.9,238.1 410.8,237.7 411.6,237.3 412.4,236.9 413.3,236.5 414.1,236.1 414.9,235.7 415.8,235.4 416.6,235.1 417.5,234.8 418.3,234.6 419.1,234.4 420.0,234.3 420.8,234.2 421.6,234.1 422.5,234.1 423.3,234.2 424.1,234.3 425.0,234.4 425.8,234.6 426.7,234.8 427.5,235.0 428.3,235.3 429.2,235.6 430.0,235.9 430.8,236.2 431.7,236.6 432.5,236.9 433.3,237.3 434.2,237.6 435.0,237.9 435.9,238.2 436.7,238.5 437.5,238.8 438.4,239.0 439.2,239.2 440.0,239.4 440.9,239.5 441.7,239.6 442.5,239.6 443.4,239.6 444.2,239.6 445.1,239.5 445.9,239.4 446.7,239.3 447.6,239.1 448.4,238.9 449.2,238.7 450.1,238.4 450.9,238.2 451.8,237.9 452.6,237.6 453.4,237.3 454.3,237.0 455.1,236.7 455.9,236.4 456.8,236.2 457.6,235.9 458.4,235.7 459.3,235.5 460.1,235.3 461.0,235.2 461.8,235.1 462.6,235.0 463.5,235.0 464.3,234.9 465.1,235.0 466.0,235.0 466.8,235.1 467.6,235.2 468.5,235.4 469.3,235.5 470.2,235.7 471.0,235.9 471.8,236.2 472.7,236.4 473.5,236.7 474.3,236.9 475.2,237.2 476.0,237.4 476.8,237.6 477.7,237.9 478.5,238.1 479.4,238.3 480.2,238.4 481.0,238.6 481.9,238.7 482.7,238.8 483.5,238.9 484.4,238.9 485.2,238.9 486.0,238.9 486.9,238.9 487.7,238.8 488.6,238.7 489.4,238.6 490.2,238.5 491.1,238.3 491.9,238.1 492.7,237.9 493.6,237.7 494.4,237.5 495.2,237.3 496.1,237.1 496.9,236.9 497.8,236.7 498.6,236.5 499.4,236.3 500.3,236.1 501.1,236.0 501.9,235.8 502.8,235.7 503.6,235.6 504.4,235.6 505.3,235.5 506.1,235.5 507.0,235.5 507.8,235.6 508.6,235.6 509.5,235.7 510.3,235.8 511.1,235.9 512.0,236.1 512.8,236.2 513.7,236.4 514.5,236.5 515.3,236.7 516.2,236.9 517.0,237.1 517.8,237.3 518.7,237.4 519.5,237.6 520.3,237.8 521.2,237.9 522.0,238.0 522.9,238.2 523.7,238.3 524.5,238.3 525.4,238.4 526.2,238.4 527.0,238.4 527.9,238.4 528.7,238.4 529.5,238.4 530.4,238.3 531.2,238.2 532.1,238.1 532.9,238.0 533.7,237.9 534.6,237.7 535.4,237.6 536.2,237.4 537.1,237.3 537.9,237.1 538.7,237.0 539.6,236.8 540.4,236.7 541.3,236.5 542.1,236.4 542.9,236.3 543.8,236.2 544.6,236.1 545.4,236.0 546.3,236.0 547.1,236.0 547.9,235.9 548.8,236.0 549.6,236.0 550.5,236.0 551.3,236.1 552.1,236.1 553.0,236.2 553.8,236.3 554.6,236.4 555.5,236.5 556.3,236.7 557.1,236.8 558.0,236.9 558.8,237.1 559.7,237.2 560.5,237.3 561.3,237.4 562.2,237.6 563.0,237.7 563.8,237.8 564.7,237.9 565.5,237.9 566.4,238.0 567.2,238.0 568.0,238.1 568.9,238.1 569.7,238.1 570.5,238.1 571.4,238.0 572.2,238.0 573.0,237.9 573.9,237.9 574.7,237.8 575.6,237.7 576.4,237.6 577.2,237.5 578.1,237.4 578.9,237.3 579.7,237.2 580.6,237.0 581.4,236.9 582.2,236.8 583.1,236.7 583.9,236.6 584.8,236.5 585.6,236.5 586.4,236.4 587.3,236.3 588.1,236.3 588.9,236.3 589.8,236.3 590.6,236.3 591.4,236.3 592.3,236.3 593.1,236.3 594.0,236.4 594.8,236.4 595.6,236.5 596.5,236.6 597.3,236.7 598.1,236.8 599.0,236.8 599.8,236.9 600.6,237.0 601.5,237.1 602.3,237.2 603.2,237.3 604.0,237.4 604.8,237.5 605.7,237.6 606.5,237.6 607.3,237.7 608.2,237.7 609.0,237.8 609.8,237.8 610.7,237.8 611.5,237.8 612.4,237.8 613.2,237.8 614.0,237.8 614.9,237.7 615.7,237.7 616.5,237.6 617.4,237.6 618.2,237.5 619.1,237.4 619.9,237.3 620.7,237.2 621.6,237.2 622.4,237.1 623.2,237.0 624.1,236.9 624.9,236.8 625.7,236.8 626.6,236.7 627.4,236.6 628.3,236.6 629.1,236.6 629.9,236.5 630.8,236.5 631.6,236.5 632.4,236.5 633.3,236.5 634.1,236.5 634.9,236.5 635.8,236.6 636.6,236.6 637.5,236.7 638.3,236.7 639.1,236.8 640.0,236.8 640.8,236.9 641.6,237.0 642.5,237.0 643.3,237.1 644.1,237.2 645.0,237.2 645.8,237.3 646.7,237.4 647.5,237.4 648.3,237.5 649.2,237.5 650.0,237.6 650.8,237.6 651.7,237.6 652.5,237.6 653.3,237.6 654.2,237.6 655.0,237.6 655.9,237.6 656.7,237.6 657.5,237.5 658.4,237.5 659.2,237.4 660.0,237.4 660.9,237.3 661.7,237.3 662.5,237.2 663.4,237.2 664.2,237.1 665.1,237.0 665.9,237.0 666.7,236.9 667.6,236.9 668.4,236.8 669.2,236.8 670.1,236.7 670.9,236.7 671.7,236.7 672.6,236.7 673.4,236.7 674.3,236.7 675.1,236.7 675.9,236.7 676.8,236.7 677.6,236.7 678.4,236.7 679.3,236.8 680.1,236.8 681.0,236.8 681.8,236.9 682.6,236.9 683.5,237.0 684.3,237.0 685.1,237.1 686.0,237.1 686.8,237.2 687.6,237.2 688.5,237.3 689.3,237.3 690.2,237.4 691.0,237.4 691.8,237.4 692.7,237.5 693.5,237.5 694.3,237.5 695.2,237.5 696.0,237.5 696.8,237.5 697.7,237.5 698.5,237.4 699.4,237.4 700.2,237.4 701.0,237.4 701.9,237.3 702.7,237.3"/>
<polyline stroke="#da8c2a" points="33.5,269.5 34.3,256.1 35.2,243.1 36.0,230.7 36.8,219.0 37.7,208.3 38.5,198.6 39.4,190.2 40.2,183.1 41.0,177.4 41.9,173.2 42.7,170.6 43.5,169.6 44.4,170.1 45.2,172.1 46.0,175.7 46.9,180.6 47.7,186.9 48.6,194.4 49.4,203.0 50.2,212.5 51.1,222.7 51.9,233.6 52.7,244.9 53.6,256.4 54.4,268.0 55.2,279.4 56.1,290.6 56.9,301.3 57.8,311.4 58.6,320.7 59.4,329.1 60.3,336.4 61.1,342.6 61.9,347.7 62.8,351.4 63.6,353.8 64.5,354.9 65.3,354.6 66.1,353.0 67.0,350.2 67.8,346.1 68.6,340.8 69.5,334.6 70.3,327.4 71.1,319.4 72.0,310.7 72.8,301.5 73.7,291.9 74.5,282.0 75.3,272.1 76.2,262.3 77.0,252.7 77.8,243.5 78.7,234.8 79.5,226.8 80.3,219.5 81.2,213.1 82.0,207.6 82.9,203.2 83.7,199.9 84.5,197.7 85.4,196.6 86.2,196.7 87.0,197.9 87.9,200.2 88.7,203.5 89.5,207.9 90.4,213.1 91.2,219.2 92.1,225.9 92.9,233.3 93.7,241.1 94.6,249.3 95.4,257.7 96.2,266.1 97.1,274.5 97.9,282.8 98.7,290.7 99.6,298.2 100.4,305.1 101.3,311.4 102.1,317.0 102.9,321.8 103.8,325.7 104.6,328.7 105.4,330.7 106.3,331.7 107.1,331.8 107.9,330.9 108.8,329.1 109.6,326.3 110.5,322.7 111.3,318.3 112.1,313.2 113.0,307.5 113.8,301.3 114.6,294.7 115.5,287.7 116.3,280.6 117.2,273.3 118.0,266.1 118.8,259.1 119.7,252.3 120.5,245.8 121.3,239.8 122.2,234.3 123.0,229.5 123.8,225.3 124.7,221.9 125.5,219.2 126.4,217.4 127.2,216.4 128.0,216.2 128.9,216.9 129.7,218.3 130.5,220.6 131.4,223.6 132.2,227.2 133.0,231.5 133.9,236.3 134.7,241.6 135.6,247.2 136.4,253.1 137.2,259.2 138.1,265.4 138.9,271.6 139.7,277.6 140.6,283.5 141.4,289.0 142.2,294.2 143.1,299.0 143.9,303.2 144.8,306.8 145.6,309.9 146.4,312.2 147.3,313.9 148.1,314.8 148.9,315.1 149.8,314.6 150.6,313.4 151.4,311.6 152.3,309.1 153.1,306.1 154.0,302.5 154.8,298.4 155.6,294.0 156.5,289.2 157.3,284.2 158.1,279.0 159.0,273.7 159.8,268.4 160.6,263.2 161.5,258.2 162.3,253.4 163.2,248.9 164.0,244.8 164.8,241.2 165.7,238.0 166.5,235.3 167.3,233.2 168.2,231.7 169.0,230.8 169.8,230.5 170.7,230.9 171.5,231.8 172.4,233.3 173.2,235.3 174.0,237.9 174.9,240.9 175.7,244.3 176.5,248.1 177.4,252.1 178.2,256.4 179.1,260.8 179.9,265.3 180.7,269.8 181.6,274.3 182.4,278.6 183.2,282.7 184.1,286.6 184.9,290.1 185.7,293.3 186.6,296.1 187.4,298.4 188.3,300.3 189.1,301.6 189.9,302.5 190.8,302.8 191.6,302.6 192.4,301.9 193.3,300.6 194.1,299.0 194.9,296.8 195.8,294.3 196.6,291.4 197.5,288.3 198.3,284.8 199.1,281.2 200.0,277.4 200.8,273.6 201.6,269.7 202.5,265.9 203.3,262.2 204.1,258.7 205.0,255.3 205.8,252.2 206.7,249.5 207.5,247.1 208.3,245.0 209.2,243.4 210.0,242.2 210.8,241.4 211.7,241.1 212.5,241.2 213.3,241.7 214.2,242.7 215.0,244.1 215.9,245.9 216.7,248.0 217.5,250.4 218.4,253.1 219.2,256.0 220.0,259.1 220.9,262.3 221.7,265.6 222.5,268.9 223.4,272.1 224.2,275.3 225.1,278.4 225.9,281.2 226.7,283.9 227.6,286.3 228.4,288.4 229.2,290.2 230.1,291.7 230.9,292.8 231.8,293.5 232.6,293.8 233.4,293.7 234.3,293.3 235.1,292.5 235.9,291.4 236.8,289.9 237.6,288.1 238.4,286.1 239.3,283.8 240.1,281.4 241.0,278.8 241.8,276.0 242.6,273.2 243.5,270.4 244.3,267.6 245.1,264.9 246.0,262.3 246.8,259.8 247.6,257.5 248.5,255.4 249.3,253.6 250.2,252.0 251.0,250.7 251.8,249.7 252.7,249.1 253.5,248.8 254.3,248.8 255.2,249.1 256.0,249.7 256.8,250.7 257.7,251.9 258.5,253.4 259.4,255.1 260.2,257.0 261.0,259.1 261.9,261.3 262.7,263.6 263.5,266.0 264.4,268.4 265.2,270.8 266.0,273.1 266.9,275.4 267.7,277.5 268.6,279.5 269.4,281.3 270.2,282.9 271.1,284.3 271.9,285.4 272.7,286.3 273.6,286.9 274.4,287.2 275.2,287.2 276.1,287.0 276.9,286.5 277.8,285.7 278.6,284.7 279.4,283.5 280.3,282.0 281.1,280.4 281.9,278.7 282.8,276.8 283.6,274.8 284.5,272.8 285.3,270.7 286.1,268.7 287.0,266.7 287.8,264.7 288.6,262.9 289.5,261.1 290.3,259.6 291.1,258.2 292.0,257.0 292.8,256.0 293.7,255.2 294.5,254.7 295.3,254.4 296.2,254.3 297.0,254.5 297.8,254.9 298.7,255.5 299.5,256.4 300.3,257.4 301.2,258.6 302.0,260.0 302.9,261.5 303.7,263.1 304.5,264.7 305.4,266.5 306.2,268.2 307.0,270.0 307.9,271.7 308.7,273.4 309.5,275.0 310.4,276.4 311.2,277.8 312.1,279.0 312.9,280.1 313.7,280.9 314.6,281.6 315.4,282.1 316.2,282.4 317.1,282.5 317.9,282.3 318.7,282.0 319.6,281.5 320.4,280.8 321.3,280.0 322.1,279.0 322.9,277.8 323.8,276.5 324.6,275.2 325.4,273.8 326.3,272.3 327.1,270.8 327.9,269.3 328.8,267.8 329.6,266.4 330.5,265.0 331.3,263.7 332.1,262.5 333.0,261.5 333.8,260.6 334.6,259.8 335.5,259.2 336.3,258.8 337.1,258.5 338.0,258.4 338.8,258.5 339.7,258.7 340.5,259.2 341.3,259.7 342.2,260.5 343.0,261.3 343.8,262.3 344.7,263.3 345.5,264.5 346.4,265.7 347.2,266.9 348.0,268.2 348.9,269.5 349.7,270.8 350.5,272.0 351.4,273.2 352.2,274.3 353.0,275.3 353.9,276.2 354.7,277.0 355.6,277.7 356.4,278.2 357.2,278.6 358.1,278.9 358.9,279.0 359.7,278.9 360.6,278.7 361.4,278.4 362.2,277.9 363.1,277.3 363.9,276.6 364.8,275.8 365.6,274.9 366.4,273.9 367.3,272.9 368.1,271.8 368.9,270.7 369.8,269.6 370.6,268.5 371.4,267.5 372.3,266.5 373.1,265.5 374.0,264.6 374.8,263.8 375.6,263.2 376.5,262.6 377.3,262.1 378.1,261.7 379.0,261.5 379.8,261.4 380.6,261.4 381.5,261.6 382.3,261.9 383.2,262.2 384.0,262.7 384.8,263.3 385.7,264.0 386.5,264.8 387.3,265.6 388.2,266.5 389.0,267.4 389.8,268.3 390.7,269.3 391.5,270.2 392.4,271.1 393.2,272.0 394.0,272.8 394.9,273.6 395.7,274.2 396.5,274.9 397.4,275.4 398.2,275.8 399.1,276.1 399.9,276.3 400.7,276.4 401.6,276.4 402.4,276.3 403.2,276.1 404.1,275.7 404.9,275.3 405.7,274.8 406.6,274.3 407.4,273.6 408.3,272.9 409.1,272.2 409.9,271.4 410.8,270.6 411.6,269.8 412.4,269.0 413.3,268.2 414.1,267.5 414.9,266.8 415.8,266.1 416.6,265.5 417.5,265.0 418.3,264.5 419.1,264.2 420.0,263.9 420.8,263.7 421.6,263.6 422.5,263.6 423.3,263.7 424.1,263.9 425.0,264.1 425.8,264.5 426.7,264.9 427.5,265.4 428.3,265.9 429.2,266.5 430.0,267.1 430.8,267.8 431.7,268.5 432.5,269.1 433.3,269.8 434.2,270.5 435.0,271.1 435.9,271.8 436.7,272.3 437.5,272.8 438.4,273.3 439.2,273.7 440.0,274.0 440.9,274.3 441.7,274.4 442.5,274.5 443.4,274.6 444.2,274.5 445.1,274.3 445.9,274.1 446.7,273.8 447.6,273.5 448.4,273.1 449.2,272.6 450.1,272.1 450.9,271.6 451.8,271.0 452.6,270.5 453.4,269.9 454.3,269.3 455.1,268.7 455.9,268.2 456.8,267.6 457.6,267.2 458.4,266.7 459.3,266.3 460.1,266.0 461.0,265.7 461.8,265.4 462.6,265.3 463.5,265.2 464.3,265.2 465.1,265.2 466.0,265.3 466.8,265.5 467.6,265.7 468.5,266.0 469.3,266.4 470.2,266.8 471.0,267.2 471.8,267.6 472.7,268.1 473.5,268.6 474.3,269.1 475.2,269.6 476.0,270.1 476.8,270.6 477.7,271.0 478.5,271.5 479.4,271.8 480.2,272.2 481.0,272.5 481.9,272.7 482.7,272.9 483.5,273.1 484.4,273.2 485.2,273.2 486.0,273.2 486.9,273.1 487.7,272.9 488.6,272.7 489.4,272.5 490.2,272.2 491.1,271.9 491.9,271.5 492.7,271.1 493.6,270.7 494.4,270.3 495.2,269.9 496.1,269.5 496.9,269.0 497.8,268.6 498.6,268.2 499.4,267.9 500.3,267.5 501.1,267.2 501.9,267.0 502.8,266.8 503.6,266.6 504.4,266.5 505.3,266.4 506.1,266.3 507.0,266.4 507.8,266.4 508.6,266.5 509.5,266.7 510.3,266.9 511.1,267.2 512.0,267.4 512.8,267.7 513.7,268.1 514.5,268.4 515.3,268.8 516.2,269.1 517.0,269.5 517.8,269.8 518.7,270.2 519.5,270.5 520.3,270.8 521.2,271.1 522.0,271.4 522.9,271.6 523.7,271.8 524.5,272.0 525.4,272.1 526.2,272.2 527.0,272.2 527.9,272.2 528.7,272.1 529.5,272.0 530.4,271.9 531.2,271.7 532.1,271.5 532.9,271.3 533.7,271.1 534.6,270.8 535.4,270.5 536.2,270.2 537.1,269.9 537.9,269.6 538.7,269.2 539.6,268.9 540.4,268.7 541.3,268.4 542.1,268.1 542.9,267.9 543.8,267.7 544.6,267.5 545.4,267.4 546.3,267.3 547.1,267.2 547.9,267.2 548.8,267.2 549.6,267.2 550.5,267.3 551.3,267.4 552.1,267.6 553.0,267.7 553.8,267.9 554.6,268.1 555.5,268.4 556.3,268.6 557.1,268.9 558.0,269.1 558.8,269.4 559.7,269.7 560.5,269.9 561.3,270.2 562.2,270.4 563.0,270.6 563.8,270.8 564.7,271.0 565.5,271.2 566.4,271.3 567.2,271.4 568.0,271.4 568.9,271.5 569.7,271.5 570.5,271.4 571.4,271.4 572.2,271.3 573.0,271.2 573.9,271.0 574.7,270.9 575.6,270.7 576.4,270.5 577.2,270.3 578.1,270.1 578.9,269.8 579.7,269.6 580.6,269.4 581.4,269.2 582.2,268.9 583.1,268.7 583.9,268.5 584.8,268.4 585.6,268.2 586.4,268.1 587.3,268.0 588.1,267.9 588.9,267.9 589.8,267.8 590.6,267.8 591.4,267.8 592.3,267.9 593.1,268.0 594.0,268.1 594.8,268.2 595.6,268.3 596.5,268.5 597.3,268.6 598.1,268.8 599.0,269.0 599.8,269.2 600.6,269.4 601.5,269.6 602.3,269.8 603.2,270.0 604.0,270.1 604.8,270.3 605.7,270.4 606.5,270.6 607.3,270.7 608.2,270.8 609.0,270.9 609.8,270.9 610.7,270.9 611.5,270.9 612.4,270.9 613.2,270.9 614.0,270.8 614.9,270.7 615.7,270.6 616.5,270.5 617.4,270.4 618.2,270.3 619.1,270.1 619.9,270.0 620.7,269.8 621.6,269.6 622.4,269.5 623.2,269.3 624.1,269.1 624.9,269.0 625.7,268.8 626.6,268.7 627.4,268.6 628.3,268.5 629.1,268.4 629.9,268.4 630.8,268.3 631.6,268.3 632.4,268.3 633.3,268.3 634.1,268.3 634.9,268.4 635.8,268.4 636.6,268.5 637.5,268.6 638.3,268.7 639.1,268.8 640.0,269.0 640.8,269.1 641.6,269.2 642.5,269.4 643.3,269.5 644.1,269.7 645.0,269.8 645.8,269.9 646.7,270.0 647.5,270.2 648.3,270.3 649.2,270.3 650.0,270.4 650.8,270.5 651.7,270.5 652.5,270.5 653.3,270.6 654.2,270.5 655.0,270.5 655.9,270.5 656.7,270.4 657.5,270.4 658.4,270.3 659.2,270.2 660.0,270.1 660.9,270.0 661.7,269.9 662.5,269.7 663.4,269.6 664.2,269.5 665.1,269.4 665.9,269.3 666.7,269.1 667.6,269.0 668.4,268.9 669.2,268.9 670.1,268.8 670.9,268.7 671.7,268.7 672.6,268.6 673.4,268.6 674.3,268.6 675.1,268.6 675.9,268.6 676.8,268.7 677.6,268.7 678.4,268.8 679.3,268.8 680.1,268.9 681.0,269.0 681.8,269.1 682.6,269.2 683.5,269.3 684.3,269.4 685.1,269.5 686.0,269.6 686.8,269.7 687.6,269.8 688.5,269.9 689.3,270.0 690.2,270.0 691.0,270.1 691.8,270.2 692.7,270.2 693.5,270.2 694.3,270.3 695.2,270.3 696.0,270.3 696.8,270.2 697.7,270.2 698.5,270.2 699.4,270.1 700.2,270.1 701.0,270.0 701.9,269.9 702.7,269.9"/>
<polyline stroke="#ff4210" points="33.5,301.9 34.3,293.9 35.2,286.1 36.0,278.6 36.8,271.6 37.7,265.2 38.5,259.4 39.4,254.3 40.2,250.0 41.0,246.6 41.9,244.1 42.7,242.6 43.5,241.9 44.4,242.2 45.2,243.5 46.0,245.6 46.9,248.6 47.7,252.4 48.6,256.8 49.4,262.0 50.2,267.7 51.1,273.8 51.9,280.3 52.7,287.1 53.6,294.0 54.4,301.0 55.2,307.9 56.1,314.6 56.9,321.0 57.8,327.0 58.6,332.6 59.4,337.6 60.3,342.1 61.1,345.8 61.9,348.8 62.8,351.0 63.6,352.5 64.5,353.1 65.3,353.0 66.1,352.0 67.0,350.3 67.8,347.8 68.6,344.7 69.5,340.9 70.3,336.6 71.1,331.8 72.0,326.6 72.8,321.1 73.7,315.3 74.5,309.4 75.3,303.5 76.2,297.6 77.0,291.8 77.8,286.3 78.7,281.1 79.5,276.3 80.3,271.9 81.2,268.1 82.0,264.8 82.9,262.1 83.7,260.1 84.5,258.8 85.4,258.2 86.2,258.2 87.0,258.9 87.9,260.3 88.7,262.3 89.5,264.9 90.4,268.1 91.2,271.7 92.1,275.8 92.9,280.2 93.7,284.9 94.6,289.8 95.4,294.8 96.2,299.9 97.1,304.9 97.9,309.9 98.7,314.6 99.6,319.1 100.4,323.3 101.3,327.1 102.1,330.4 102.9,333.3 103.8,335.6 104.6,337.4 105.4,338.6 106.3,339.2 107.1,339.3 107.9,338.7 108.8,337.6 109.6,336.0 110.5,333.8 111.3,331.2 112.1,328.1 113.0,324.7 113.8,321.0 114.6,317.0 115.5,312.8 116.3,308.5 117.2,304.2 118.0,299.9 118.8,295.6 119.7,291.6 120.5,287.7 121.3,284.1 122.2,280.8 123.0,277.9 123.8,275.4 124.7,273.3 125.5,271.7 126.4,270.6 127.2,270.0 128.0,269.9 128.9,270.3 129.7,271.2 130.5,272.6 131.4,274.3 132.2,276.5 133.0,279.1 133.9,282.0 134.7,285.2 135.6,288.5 136.4,292.1 137.2,295.7 138.1,299.4 138.9,303.1 139.7,306.8 140.6,310.3 141.4,313.6 142.2,316.7 143.1,319.6 143.9,322.1 144.8,324.3 145.6,326.1 146.4,327.5 147.3,328.5 148.1,329.1 148.9,329.2 149.8,329.0 150.6,328.3 151.4,327.2 152.3,325.7 153.1,323.8 154.0,321.7 154.8,319.3 155.6,316.6 156.5,313.7 157.3,310.7 158.1,307.6 159.0,304.4 159.8,301.3 160.6,298.1 161.5,295.1 162.3,292.3 163.2,289.6 164.0,287.1 164.8,284.9 165.7,283.0 166.5,281.4 167.3,280.1 168.2,279.2 169.0,278.7 169.8,278.5 170.7,278.7 171.5,279.3 172.4,280.2 173.2,281.4 174.0,282.9 174.9,284.7 175.7,286.8 176.5,289.0 177.4,291.5 178.2,294.0 179.1,296.7 179.9,299.4 180.7,302.1 181.6,304.8 182.4,307.4 183.2,309.8 184.1,312.1 184.9,314.3 185.7,316.2 186.6,317.9 187.4,319.3 188.3,320.4 189.1,321.2 189.9,321.7 190.8,321.9 191.6,321.7 192.4,321.3 193.3,320.6 194.1,319.6 194.9,318.3 195.8,316.8 196.6,315.1 197.5,313.2 198.3,311.1 199.1,308.9 200.0,306.7 200.8,304.4 201.6,302.0 202.5,299.8 203.3,297.5 204.1,295.4 205.0,293.4 205.8,291.5 206.7,289.9 207.5,288.4 208.3,287.2 209.2,286.2 210.0,285.5 210.8,285.0 211.7,284.8 212.5,284.9 213.3,285.2 214.2,285.8 215.0,286.7 215.9,287.7 216.7,289.0 217.5,290.4 218.4,292.1 219.2,293.8 220.0,295.6 220.9,297.6 221.7,299.5 222.5,301.5 223.4,303.5 224.2,305.4 225.1,307.2 225.9,308.9 226.7,310.5 227.6,312.0 228.4,313.3 229.2,314.3 230.1,315.2 230.9,315.9 231.8,316.3 232.6,316.5 233.4,316.4 234.3,316.2 235.1,315.7 235.9,315.0 236.8,314.1 237.6,313.1 238.4,311.9 239.3,310.5 240.1,309.0 241.0,307.5 241.8,305.8 242.6,304.1 243.5,302.5 244.3,300.8 245.1,299.1 246.0,297.6 246.8,296.1 247.6,294.7 248.5,293.4 249.3,292.3 250.2,291.4 251.0,290.6 251.8,290.0 252.7,289.7 253.5,289.5 254.3,289.5 255.2,289.7 256.0,290.0 256.8,290.6 257.7,291.3 258.5,292.2 259.4,293.2 260.2,294.4 261.0,295.6 261.9,297.0 262.7,298.4 263.5,299.8 264.4,301.2 265.2,302.7 266.0,304.1 266.9,305.4 267.7,306.7 268.6,307.9 269.4,309.0 270.2,310.0 271.1,310.8 271.9,311.5 272.7,312.0 273.6,312.3 274.4,312.5 275.2,312.5 276.1,312.4 276.9,312.1 277.8,311.6 278.6,311.0 279.4,310.3 280.3,309.4 281.1,308.5 281.9,307.4 282.8,306.3 283.6,305.1 284.5,303.9 285.3,302.6 286.1,301.4 287.0,300.2 287.8,299.0 288.6,297.9 289.5,296.9 290.3,295.9 291.1,295.1 292.0,294.4 292.8,293.8 293.7,293.3 294.5,293.0 295.3,292.8 296.2,292.8 297.0,292.9 297.8,293.1 298.7,293.5 299.5,294.0 300.3,294.6 301.2,295.4 302.0,296.2 302.9,297.1 303.7,298.0 304.5,299.0 305.4,300.1 306.2,301.1 307.0,302.2 307.9,303.2 308.7,304.2 309.5,305.2 310.4,306.1 311.2,306.9 312.1,307.6 312.9,308.2 313.7,308.8 314.6,309.2 315.4,309.5 316.2,309.6 317.1,309.7 317.9,309.6 318.7,309.4 319.6,309.1 320.4,308.7 321.3,308.2 322.1,307.6 322.9,306.9 323.8,306.1 324.6,305.3 325.4,304.5 326.3,303.6 327.1,302.7 327.9,301.8 328.8,300.9 329.6,300.0 330.5,299.2 331.3,298.4 332.1,297.7 333.0,297.1 333.8,296.5 334.6,296.1 335.5,295.7 336.3,295.5 337.1,295.3 338.0,295.2 338.8,295.3 339.7,295.4 340.5,295.7 341.3,296.0 342.2,296.5 343.0,297.0 343.8,297.6 344.7,298.2 345.5,298.9 346.4,299.6 347.2,300.4 348.0,301.1 348.9,301.9 349.7,302.7 350.5,303.4 351.4,304.1 352.2,304.8 353.0,305.4 353.9,305.9 354.7,306.4 355.6,306.8 356.4,307.1 357.2,307.4 358.1,307.5 358.9,307.6 359.7,307.6 360.6,307.4 361.4,307.2 362.2,307.0 363.1,306.6 363.9,306.2 364.8,305.7 365.6,305.1 366.4,304.6 367.3,303.9 368.1,303.3 368.9,302.6 369.8,302.0 370.6,301.3 371.4,300.7 372.3,300.1 373.1,299.5 374.0,299.0 374.8,298.5 375.6,298.1 376.5,297.7 377.3,297.5 378.1,297.2 379.0,297.1 379.8,297.0 380.6,297.1 381.5,297.2 382.3,297.3 383.2,297.5 384.0,297.8 384.8,298.2 385.7,298.6 386.5,299.1 387.3,299.6 388.2,300.1 389.0,300.6 389.8,301.2 390.7,301.8 391.5,302.3 392.4,302.9 393.2,303.4 394.0,303.9 394.9,304.3 395.7,304.7 396.5,305.1 397.4,305.4 398.2,305.7 399.1,305.9 399.9,306.0 400.7,306.0 401.6,306.0 402.4,306.0 403.2,305.8 404.1,305.6 404.9,305.4 405.7,305.1 406.6,304.8 407.4,304.4 408.3,304.0 409.1,303.5 409.9,303.0 410.8,302.6 411.6,302.1 412.4,301.6 413.3,301.1 414.1,300.7 414.9,300.3 415.8,299.9 416.6,299.5 417.5,299.2 418.3,298.9 419.1,298.7 420.0,298.5 420.8,298.4 421.6,298.4 422.5,298.4 423.3,298.4 424.1,298.5 425.0,298.7 425.8,298.9 426.7,299.1 427.5,299.4 428.3,299.7 429.2,300.1 430.0,300.5 430.8,300.9 431.7,301.3 432.5,301.7 433.3,302.1 434.2,302.5 435.0,302.9 435.9,303.3 436.7,303.6 437.5,303.9 438.4,304.2 439.2,304.4 440.0,304.6 440.9,304.8 441.7,304.9 442.5,304.9 443.4,304.9 444.2,304.9 445.1,304.8 445.9,304.7 446.7,304.5 447.6,304.3 448.4,304.1 449.2,303.8 450.1,303.5 450.9,303.2 451.8,302.8 452.6,302.5 453.4,302.1 454.3,301.8 455.1,301.4 455.9,301.1 456.8,300.8 457.6,300.5 458.4,300.2 459.3,300.0 460.1,299.8 461.0,299.6 461.8,299.5 462.6,299.4 463.5,299.3 464.3,299.3 465.1,299.3 466.0,299.4 466.8,299.5 467.6,299.6 468.5,299.8 469.3,300.0 470.2,300.3 471.0,300.5 471.8,300.8 472.7,301.1 473.5,301.4 474.3,301.7 475.2,302.0 476.0,302.3 476.8,302.5 477.7,302.8 478.5,303.1 479.4,303.3 480.2,303.5 481.0,303.7 481.9,303.8 482.7,304.0 483.5,304.0 484.4,304.1 485.2,304.1 486.0,304.1 486.9,304.0 487.7,304.0 488.6,303.8 489.4,303.7 490.2,303.5 491.1,303.3 491.9,303.1 492.7,302.9 493.6,302.6 494.4,302.4 495.2,302.1 496.1,301.9 496.9,301.6 497.8,301.4 498.6,301.1 499.4,300.9 500.3,300.7 501.1,300.5 501.9,300.4 502.8,300.3 503.6,300.1 504.4,300.1 505.3,300.0 506.1,300.0 507.0,300.0 507.8,300.1 508.6,300.1 509.5,300.2 510.3,300.3 511.1,300.5 512.0,300.7 512.8,300.8 513.7,301.0 514.5,301.2 515.3,301.5 516.2,301.7 517.0,301.9 517.8,302.1 518.7,302.3 519.5,302.5 520.3,302.7 521.2,302.9 522.0,303.0 522.9,303.2 523.7,303.3 524.5,303.4 525.4,303.5 526.2,303.5 527.0,303.5 527.9,303.5 528.7,303.5 529.5,303.4 530.4,303.3 531.2,303.2 532.1,303.1 532.9,303.0 533.7,302.8 534.6,302.7 535.4,302.5 536.2,302.3 537.1,302.1 537.9,301.9 538.7,301.7 539.6,301.6 540.4,301.4 541.3,301.2 542.1,301.1 542.9,300.9 543.8,300.8 544.6,300.7 545.4,300.6 546.3,300.6 547.1,300.5 547.9,300.5 548.8,300.5 549.6,300.5 550.5,300.6 551.3,300.7 552.1,300.7 553.0,300.8 553.8,301.0 554.6,301.1 555.5,301.2 556.3,301.4 557.1,301.5 558.0,301.7 558.8,301.8 559.7,302.0 560.5,302.2 561.3,302.3 562.2,302.5 563.0,302.6 563.8,302.7 564.7,302.8 565.5,302.9 566.4,303.0 567.2,303.0 568.0,303.1 568.9,303.1 569.7,303.1 570.5,303.1 571.4,303.0 572.2,303.0 573.0,302.9 573.9,302.8 574.7,302.7 575.6,302.6 576.4,302.5 577.2,302.4 578.1,302.2 578.9,302.1 579.7,302.0 580.6,301.8 581.4,301.7 582.2,301.6 583.1,301.4 583.9,301.3 584.8,301.2 585.6,301.1 586.4,301.1 587.3,301.0 588.1,300.9 588.9,300.9 589.8,300.9 590.6,300.9 591.4,300.9 592.3,300.9 593.1,301.0 594.0,301.0 594.8,301.1 595.6,301.2 596.5,301.3 597.3,301.4 598.1,301.5 599.0,301.6 599.8,301.7 600.6,301.8 601.5,301.9 602.3,302.1 603.2,302.2 604.0,302.3 604.8,302.4 605.7,302.5 606.5,302.5 607.3,302.6 608.2,302.7 609.0,302.7 609.8,302.7 610.7,302.8 611.5,302.8 612.4,302.8 613.2,302.7 614.0,302.7 614.9,302.6 615.7,302.6 616.5,302.5 617.4,302.4 618.2,302.4 619.1,302.3 619.9,302.2 620.7,302.1 621.6,302.0 622.4,301.9 623.2,301.8 624.1,301.7 624.9,301.6 625.7,301.5 626.6,301.4 627.4,301.4 628.3,301.3 629.1,301.2 629.9,301.2 630.8,301.2 631.6,301.2 632.4,301.2 633.3,301.2 634.1,301.2 634.9,301.2 635.8,301.3 636.6,301.3 637.5,301.4 638.3,301.4 639.1,301.5 640.0,301.6 640.8,301.7 641.6,301.7 642.5,301.8 643.3,301.9 644.1,302.0 645.0,302.1 645.8,302.2 646.7,302.2 647.5,302.3 648.3,302.4 649.2,302.4 650.0,302.5 650.8,302.5 651.7,302.5 652.5,302.5 653.3,302.5 654.2,302.5 655.0,302.5 655.9,302.5 656.7,302.5 657.5,302.4 658.4,302.4 659.2,302.3 660.0,302.3 660.9,302.2 661.7,302.1 662.5,302.0 663.4,302.0 664.2,301.9 665.1,301.8 665.9,301.8 666.7,301.7 667.6,301.6 668.4,301.6 669.2,301.5 670.1,301.5 670.9,301.4 671.7,301.4 672.6,301.4 673.4,301.4 674.3,301.4 675.1,301.4 675.9,301.4 676.8,301.4 677.6,301.4 678.4,301.5 679.3,301.5 680.1,301.5 681.0,301.6 681.8,301.6 682.6,301.7 683.5,301.8 684.3,301.8 685.1,301.9 686.0,302.0 686.8,302.0 687.6,302.1 688.5,302.1 689.3,302.2 690.2,302.2 691.0,302.3 691.8,302.3 692.7,302.3 693.5,302.3 694.3,302.4 695.2,302.4 696.0,302.4 696.8,302.3 697.7,302.3 698.5,302.3 699.4,302.3 700.2,302.3 701.0,302.2 701.9,302.2 702.7,302.1"/>
<polyline stroke="#10f520" points="33.5,399.1 34.3,396.4 35.2,393.8 36.0,391.3 36.8,389.0 37.7,386.9 38.5,384.9 39.4,383.2 40.2,381.8 41.0,380.7 41.9,379.8 42.7,379.3 43.5,379.1 44.4,379.2 45.2,379.6 46.0,380.3 46.9,381.3 47.7,382.6 48.6,384.1 49.4,385.8 50.2,387.7 51.1,389.7 51.9,391.9 52.7,394.2 53.6,396.5 54.4,398.8 55.2,401.1 56.1,403.3 56.9,405.5 57.8,407.5 58.6,409.3 59.4,411.0 60.3,412.5 61.1,413.7 61.9,414.7 62.8,415.5 63.6,416.0 64.5,416.2 65.3,416.1 66.1,415.8 67.0,415.2 67.8,414.4 68.6,413.4 69.5,412.1 70.3,410.7 71.1,409.1 72.0,407.3 72.8,405.5 73.7,403.6 74.5,401.6 75.3,399.6 76.2,397.7 77.0,395.7 77.8,393.9 78.7,392.2 79.5,390.6 80.3,389.1 81.2,387.8 82.0,386.7 82.9,385.8 83.7,385.2 84.5,384.7 85.4,384.5 86.2,384.5 87.0,384.8 87.9,385.2 88.7,385.9 89.5,386.8 90.4,387.8 91.2,389.0 92.1,390.4 92.9,391.9 93.7,393.4 94.6,395.1 95.4,396.7 96.2,398.4 97.1,400.1 97.9,401.8 98.7,403.3 99.6,404.8 100.4,406.2 101.3,407.5 102.1,408.6 102.9,409.6 103.8,410.3 104.6,410.9 105.4,411.3 106.3,411.5 107.1,411.6 107.9,411.4 108.8,411.0 109.6,410.5 110.5,409.7 111.3,408.9 112.1,407.8 113.0,406.7 113.8,405.5 114.6,404.1 115.5,402.7 116.3,401.3 117.2,399.9 118.0,398.4 118.8,397.0 119.7,395.7 120.5,394.4 121.3,393.2 122.2,392.1 123.0,391.1 123.8,390.3 124.7,389.6 125.5,389.0 126.4,388.7 127.2,388.5 128.0,388.4 128.9,388.6 129.7,388.9 130.5,389.3 131.4,389.9 132.2,390.6 133.0,391.5 133.9,392.5 134.7,393.5 135.6,394.6 136.4,395.8 137.2,397.0 138.1,398.3 138.9,399.5 139.7,400.7 140.6,401.9 141.4,403.0 142.2,404.0 143.1,405.0 143.9,405.8 144.8,406.6 145.6,407.2 146.4,407.6 147.3,408.0 148.1,408.2 148.9,408.2 149.8,408.1 150.6,407.9 151.4,407.5 152.3,407.0 153.1,406.4 154.0,405.7 154.8,404.9 155.6,404.0 156.5,403.0 157.3,402.0 158.1,401.0 159.0,399.9 159.8,398.9 160.6,397.8 161.5,396.8 162.3,395.9 163.2,395.0 164.0,394.2 164.8,393.4 165.7,392.8 166.5,392.3 167.3,391.8 168.2,391.5 169.0,391.4 169.8,391.3 170.7,391.4 171.5,391.6 172.4,391.9 173.2,392.3 174.0,392.8 174.9,393.4 175.7,394.1 176.5,394.8 177.4,395.6 178.2,396.5 179.1,397.4 179.9,398.3 180.7,399.2 181.6,400.1 182.4,400.9 183.2,401.7 184.1,402.5 184.9,403.2 185.7,403.9 186.6,404.4 187.4,404.9 188.3,405.3 189.1,405.5 189.9,405.7 190.8,405.8 191.6,405.7 192.4,405.6 193.3,405.3 194.1,405.0 194.9,404.6 195.8,404.1 196.6,403.5 197.5,402.9 198.3,402.2 199.1,401.4 200.0,400.7 200.8,399.9 201.6,399.1 202.5,398.4 203.3,397.6 204.1,396.9 205.0,396.3 205.8,395.6 206.7,395.1 207.5,394.6 208.3,394.2 209.2,393.9 210.0,393.6 210.8,393.5 211.7,393.4 212.5,393.4 213.3,393.5 214.2,393.7 215.0,394.0 215.9,394.4 216.7,394.8 217.5,395.3 218.4,395.8 219.2,396.4 220.0,397.0 220.9,397.7 221.7,398.3 222.5,399.0 223.4,399.6 224.2,400.3 225.1,400.9 225.9,401.4 226.7,402.0 227.6,402.5 228.4,402.9 229.2,403.2 230.1,403.5 230.9,403.8 231.8,403.9 232.6,404.0 233.4,403.9 234.3,403.9 235.1,403.7 235.9,403.5 236.8,403.2 237.6,402.8 238.4,402.4 239.3,402.0 240.1,401.5 241.0,401.0 241.8,400.4 242.6,399.8 243.5,399.3 244.3,398.7 245.1,398.2 246.0,397.7 246.8,397.2 247.6,396.7 248.5,396.3 249.3,395.9 250.2,395.6 251.0,395.3 251.8,395.1 252.7,395.0 253.5,395.0 254.3,395.0 255.2,395.0 256.0,395.1 256.8,395.3 257.7,395.6 258.5,395.9 259.4,396.2 260.2,396.6 261.0,397.0 261.9,397.5 262.7,397.9 263.5,398.4 264.4,398.9 265.2,399.4 266.0,399.8 266.9,400.3 267.7,400.7 268.6,401.1 269.4,401.5 270.2,401.8 271.1,402.1 271.9,402.3 272.7,402.5 273.6,402.6 274.4,402.6 275.2,402.6 276.1,402.6 276.9,402.5 277.8,402.3 278.6,402.1 279.4,401.9 280.3,401.6 281.1,401.3 281.9,400.9 282.8,400.6 283.6,400.2 284.5,399.8 285.3,399.3 286.1,398.9 287.0,398.5 287.8,398.1 288.6,397.8 289.5,397.4 290.3,397.1 291.1,396.8 292.0,396.6 292.8,396.4 293.7,396.2 294.5,396.1 295.3,396.1 296.2,396.1 297.0,396.1 297.8,396.2 298.7,396.3 299.5,396.5 300.3,396.7 301.2,396.9 302.0,397.2 302.9,397.5 303.7,397.8 304.5,398.1 305.4,398.5 306.2,398.8 307.0,399.2 307.9,399.5 308.7,399.9 309.5,400.2 310.4,400.5 311.2,400.8 312.1,401.0 312.9,401.2 313.7,401.4 314.6,401.5 315.4,401.6 316.2,401.7 317.1,401.7 317.9,401.7 318.7,401.6 319.6,401.5 320.4,401.4 321.3,401.2 322.1,401.0 322.9,400.8 323.8,400.5 324.6,400.2 325.4,400.0 326.3,399.7 327.1,399.4 327.9,399.1 328.8,398.8 329.6,398.5 330.5,398.2 331.3,397.9 332.1,397.7 333.0,397.5 333.8,397.3 334.6,397.2 335.5,397.0 336.3,397.0 337.1,396.9 338.0,396.9 338.8,396.9 339.7,396.9 340.5,397.0 341.3,397.1 342.2,397.3 343.0,397.5 343.8,397.7 344.7,397.9 345.5,398.1 346.4,398.3 347.2,398.6 348.0,398.8 348.9,399.1 349.7,399.4 350.5,399.6 351.4,399.8 352.2,400.1 353.0,400.3 353.9,400.4 354.7,400.6 355.6,400.7 356.4,400.8 357.2,400.9 358.1,401.0 358.9,401.0 359.7,401.0 360.6,400.9 361.4,400.9 362.2,400.8 363.1,400.7 363.9,400.5 364.8,400.4 365.6,400.2 366.4,400.0 367.3,399.8 368.1,399.6 368.9,399.3 369.8,399.1 370.6,398.9 371.4,398.7 372.3,398.5 373.1,398.3 374.0,398.1 374.8,398.0 375.6,397.8 376.5,397.7 377.3,397.6 378.1,397.5 379.0,397.5 379.8,397.5 380.6,397.5 381.5,397.5 382.3,397.6 383.2,397.6 384.0,397.7 384.8,397.9 385.7,398.0 386.5,398.2 387.3,398.3 388.2,398.5 389.0,398.7 389.8,398.9 390.7,399.1 391.5,399.2 392.4,399.4 393.2,399.6 394.0,399.8 394.9,399.9 395.7,400.0 396.5,400.2 397.4,400.3 398.2,400.4 399.1,400.4 399.9,400.5 400.7,400.5 401.6,400.5 402.4,400.5 403.2,400.4 404.1,400.3 404.9,400.3 405.7,400.2 406.6,400.1 407.4,399.9 408.3,399.8 409.1,399.6 409.9,399.5 410.8,399.3 411.6,399.2 412.4,399.0 413.3,398.8 414.1,398.7 414.9,398.6 415.8,398.4 416.6,398.3 417.5,398.2 418.3,398.1 419.1,398.0 420.0,398.0 420.8,397.9 421.6,397.9 422.5,397.9 423.3,397.9 424.1,398.0 425.0,398.0 425.8,398.1 426.7,398.2 427.5,398.3 428.3,398.4 429.2,398.5 430.0,398.6 430.8,398.8 431.7,398.9 432.5,399.0 433.3,399.2 434.2,399.3 435.0,399.4 435.9,399.6 436.7,399.7 437.5,399.8 438.4,399.9 439.2,399.9 440.0,400.0 440.9,400.1 441.7,400.1 442.5,400.1 443.4,400.1 444.2,400.1 445.1,400.1 445.9,400.0 446.7,400.0 447.6,399.9 448.4,399.8 449.2,399.7 450.1,399.6 450.9,399.5 451.8,399.4 452.6,399.3 453.4,399.2 454.3,399.1 455.1,398.9 455.9,398.8 456.8,398.7 457.6,398.6 458.4,398.5 459.3,398.5 460.1,398.4 461.0,398.3 461.8,398.3 462.6,398.3 463.5,398.2 464.3,398.2 465.1,398.2 466.0,398.3 466.8,398.3 467.6,398.3 468.5,398.4 469.3,398.5 470.2,398.6 471.0,398.6 471.8,398.7 472.7,398.8 473.5,398.9 474.3,399.0 475.2,399.1 476.0,399.2 476.8,399.3 477.7,399.4 478.5,399.5 479.4,399.6 480.2,399.6 481.0,399.7 481.9,399.7 482.7,399.8 483.5,399.8 484.4,399.8 485.2,399.8 486.0,399.8 486.9,399.8 487.7,399.8 488.6,399.7 489.4,399.7 490.2,399.6 491.1,399.6 491.9,399.5 492.7,399.4 493.6,399.3 494.4,399.3 495.2,399.2 496.1,399.1 496.9,399.0 497.8,398.9 498.6,398.8 499.4,398.8 500.3,398.7 501.1,398.6 501.9,398.6 502.8,398.6 503.6,398.5 504.4,398.5 505.3,398.5 506.1,398.5 507.0,398.5 507.8,398.5 508.6,398.5 509.5,398.5 510.3,398.6 511.1,398.6 512.0,398.7 512.8,398.7 513.7,398.8 514.5,398.9 515.3,399.0 516.2,399.0 517.0,399.1 517.8,399.2 518.7,399.2 519.5,399.3 520.3,399.4 521.2,399.4 522.0,399.5 522.9,399.5 523.7,399.6 524.5,399.6 525.4,399.6 526.2,399.6 527.0,399.6 527.9,399.6 528.7,399.6 529.5,399.6 530.4,399.6 531.2,399.5 532.1,399.5 532.9,399.5 533.7,399.4 534.6,399.4 535.4,399.3 536.2,399.2 537.1,399.2 537.9,399.1 538.7,399.0 539.6,399.0 540.4,398.9 541.3,398.9 542.1,398.8 542.9,398.8 543.8,398.7 544.6,398.7 545.4,398.7 546.3,398.7 547.1,398.6 547.9,398.6 548.8,398.6 549.6,398.6 550.5,398.7 551.3,398.7 552.1,398.7 553.0,398.7 553.8,398.8 554.6,398.8 555.5,398.9 556.3,398.9 557.1,399.0 558.0,399.0 558.8,399.1 559.7,399.1 560.5,399.2 561.3,399.2 562.2,399.3 563.0,399.3 563.8,399.4 564.7,399.4 565.5,399.4 566.4,399.5 567.2,399.5 568.0,399.5 568.9,399.5 569.7,399.5 570.5,399.5 571.4,399.5 572.2,399.5 573.0,399.4 573.9,399.4 574.7,399.4 575.6,399.3 576.4,399.3 577.2,399.3 578.1,399.2 578.9,399.2 579.7,399.1 580.6,399.1 581.4,399.0 582.2,399.0 583.1,398.9 583.9,398.9 584.8,398.9 585.6,398.8 586.4,398.8 587.3,398.8 588.1,398.8 588.9,398.8 589.8,398.8 590.6,398.8 591.4,398.8 592.3,398.8 593.1,398.8 594.0,398.8 594.8,398.8 595.6,398.9 596.5,398.9 597.3,398.9 598.1,399.0 599.0,399.0 599.8,399.0 600.6,399.1 601.5,399.1 602.3,399.2 603.2,399.2 604.0,399.2 604.8,399.3 605.7,399.3 606.5,399.3 607.3,399.3 608.2,399.4 609.0,399.4 609.8,399.4 610.7,399.4 611.5,399.4 612.4,399.4 613.2,399.4 614.0,399.4 614.9,399.3 615.7,399.3 616.5,399.3 617.4,399.3 618.2,399.3 619.1,399.2 619.9,399.2 620.7,399.2 621.6,399.1 622.4,399.1 623.2,399.1 624.1,399.0 624.9,399.0 625.7,399.0 626.6,398.9 627.4,398.9 628.3,398.9 629.1,398.9 629.9,398.9 630.8,398.9 631.6,398.9 632.4,398.9 633.3,398.9 634.1,398.9 634.9,398.9 635.8,398.9 636.6,398.9 637.5,398.9 638.3,398.9 639.1,399.0 640.0,399.0 640.8,399.0 641.6,399.0 642.5,399.1 643.3,399.1 644.1,399.1 645.0,399.2 645.8,399.2 646.7,399.2 647.5,399.2 648.3,399.3 649.2,399.3 650.0,399.3 650.8,399.3 651.7,399.3 652.5,399.3 653.3,399.3 654.2,399.3 655.0,399.3 655.9,399.3 656.7,399.3 657.5,399.3 658.4,399.3 659.2,399.2 660.0,399.2 660.9,399.2 661.7,399.2 662.5,399.1 663.4,399.1 664.2,399.1 665.1,399.1 665.9,399.1 666.7,399.0 667.6,399.0 668.4,399.0 669.2,399.0 670.1,399.0 670.9,398.9 671.7,398.9 672.6,398.9 673.4,398.9 674.3,398.9 675.1,398.9 675.9,398.9 676.8,398.9 677.6,398.9 678.4,399.0 679.3,399.0 680.1,399.0 681.0,399.0 681.8,399.0 682.6,399.0 683.5,399.1 684.3,399.1 685.1,399.1 686.0,399.1 686.8,399.1 687.6,399.2 688.5,399.2 689.3,399.2 690.2,399.2 691.0,399.2 691.8,399.2 692.7,399.2 693.5,399.2 694.3,399.3 695.2,399.3 696.0,399.3 696.8,399.2 697.7,399.2 698.5,399.2 699.4,399.2 700.2,399.2 701.0,399.2 701.9,399.2 702.7,399.2"/>
<polyline stroke="#f0a020" stroke-width="1.4" points="33.5,453.1 34.3,447.7 35.2,442.5 36.0,437.6 36.8,432.9 37.7,428.6 38.5,424.7 39.4,421.4 40.2,418.5 41.0,416.3 41.9,414.6 42.7,413.5 43.5,413.1 44.4,413.3 45.2,414.2 46.0,415.6 46.9,417.6 47.7,420.1 48.6,423.1 49.4,426.5 50.2,430.3 51.1,434.4 51.9,438.7 52.7,443.2 53.6,447.9 54.4,452.5 55.2,457.1 56.1,461.5 56.9,465.8 57.8,469.9 58.6,473.6 59.4,476.9 60.3,479.9 61.1,482.4 61.9,484.4 62.8,485.9 63.6,486.8 64.5,487.3 65.3,487.1 66.1,486.5 67.0,485.4 67.8,483.7 68.6,481.6 69.5,479.1 70.3,476.3 71.1,473.0 72.0,469.6 72.8,465.9 73.7,462.0 74.5,458.1 75.3,454.1 76.2,450.2 77.0,446.4 77.8,442.7 78.7,439.2 79.5,436.0 80.3,433.1 81.2,430.5 82.0,428.4 82.9,426.6 83.7,425.2 84.5,424.4 85.4,423.9 86.2,424.0 87.0,424.5 87.9,425.4 88.7,426.7 89.5,428.5 90.4,430.5 91.2,433.0 92.1,435.7 92.9,438.6 93.7,441.7 94.6,445.0 95.4,448.4 96.2,451.8 97.1,455.1 97.9,458.4 98.7,461.6 99.6,464.6 100.4,467.4 101.3,469.9 102.1,472.1 102.9,474.0 103.8,475.6 104.6,476.8 105.4,477.6 106.3,478.0 107.1,478.0 107.9,477.7 108.8,476.9 109.6,475.8 110.5,474.4 111.3,472.6 112.1,470.6 113.0,468.3 113.8,465.8 114.6,463.2 115.5,460.4 116.3,457.5 117.2,454.6 118.0,451.8 118.8,448.9 119.7,446.2 120.5,443.6 121.3,441.2 122.2,439.0 123.0,437.1 123.8,435.4 124.7,434.0 125.5,433.0 126.4,432.3 127.2,431.8 128.0,431.8 128.9,432.0 129.7,432.6 130.5,433.5 131.4,434.7 132.2,436.2 133.0,437.9 133.9,439.8 134.7,441.9 135.6,444.2 136.4,446.6 137.2,449.0 138.1,451.5 138.9,453.9 139.7,456.3 140.6,458.7 141.4,460.9 142.2,463.0 143.1,464.9 143.9,466.6 144.8,468.0 145.6,469.2 146.4,470.2 147.3,470.9 148.1,471.2 148.9,471.3 149.8,471.1 150.6,470.7 151.4,469.9 152.3,468.9 153.1,467.7 154.0,466.3 154.8,464.7 155.6,462.9 156.5,461.0 157.3,459.0 158.1,456.9 159.0,454.8 159.8,452.7 160.6,450.6 161.5,448.6 162.3,446.7 163.2,444.9 164.0,443.2 164.8,441.8 165.7,440.5 166.5,439.4 167.3,438.6 168.2,438.0 169.0,437.6 169.8,437.5 170.7,437.6 171.5,438.0 172.4,438.6 173.2,439.4 174.0,440.5 174.9,441.7 175.7,443.0 176.5,444.5 177.4,446.1 178.2,447.9 179.1,449.6 179.9,451.4 180.7,453.2 181.6,455.0 182.4,456.7 183.2,458.4 184.1,459.9 184.9,461.4 185.7,462.6 186.6,463.7 187.4,464.7 188.3,465.4 189.1,466.0 189.9,466.3 190.8,466.4 191.6,466.3 192.4,466.0 193.3,465.6 194.1,464.9 194.9,464.0 195.8,463.0 196.6,461.9 197.5,460.6 198.3,459.2 199.1,457.8 200.0,456.3 200.8,454.7 201.6,453.2 202.5,451.7 203.3,450.2 204.1,448.8 205.0,447.4 205.8,446.2 206.7,445.1 207.5,444.1 208.3,443.3 209.2,442.6 210.0,442.2 210.8,441.9 211.7,441.7 212.5,441.8 213.3,442.0 214.2,442.4 215.0,442.9 215.9,443.7 216.7,444.5 217.5,445.5 218.4,446.5 219.2,447.7 220.0,448.9 220.9,450.2 221.7,451.5 222.5,452.8 223.4,454.2 224.2,455.4 225.1,456.6 225.9,457.8 226.7,458.9 227.6,459.8 228.4,460.7 229.2,461.4 230.1,462.0 230.9,462.4 231.8,462.7 232.6,462.8 233.4,462.8 234.3,462.6 235.1,462.3 235.9,461.8 236.8,461.3 237.6,460.6 238.4,459.7 239.3,458.8 240.1,457.9 241.0,456.8 241.8,455.7 242.6,454.6 243.5,453.5 244.3,452.3 245.1,451.3 246.0,450.2 246.8,449.2 247.6,448.3 248.5,447.5 249.3,446.7 250.2,446.1 251.0,445.6 251.8,445.2 252.7,444.9 253.5,444.8 254.3,444.8 255.2,444.9 256.0,445.2 256.8,445.6 257.7,446.1 258.5,446.6 259.4,447.3 260.2,448.1 261.0,448.9 261.9,449.8 262.7,450.7 263.5,451.7 264.4,452.7 265.2,453.6 266.0,454.6 266.9,455.5 267.7,456.3 268.6,457.1 269.4,457.8 270.2,458.5 271.1,459.0 271.9,459.5 272.7,459.8 273.6,460.1 274.4,460.2 275.2,460.2 276.1,460.1 276.9,459.9 277.8,459.6 278.6,459.2 279.4,458.7 280.3,458.1 281.1,457.5 281.9,456.8 282.8,456.0 283.6,455.2 284.5,454.4 285.3,453.6 286.1,452.8 287.0,452.0 287.8,451.2 288.6,450.4 289.5,449.8 290.3,449.1 291.1,448.6 292.0,448.1 292.8,447.7 293.7,447.4 294.5,447.2 295.3,447.1 296.2,447.0 297.0,447.1 297.8,447.3 298.7,447.5 299.5,447.8 300.3,448.3 301.2,448.7 302.0,449.3 302.9,449.9 303.7,450.5 304.5,451.2 305.4,451.9 306.2,452.6 307.0,453.3 307.9,454.0 308.7,454.7 309.5,455.3 310.4,455.9 311.2,456.4 312.1,456.9 312.9,457.3 313.7,457.7 314.6,457.9 315.4,458.1 316.2,458.3 317.1,458.3 317.9,458.2 318.7,458.1 319.6,457.9 320.4,457.6 321.3,457.3 322.1,456.9 322.9,456.4 323.8,455.9 324.6,455.4 325.4,454.8 326.3,454.2 327.1,453.6 327.9,453.0 328.8,452.4 329.6,451.8 330.5,451.3 331.3,450.8 332.1,450.3 333.0,449.9 333.8,449.5 334.6,449.2 335.5,449.0 336.3,448.8 337.1,448.7 338.0,448.7 338.8,448.7 339.7,448.8 340.5,449.0 341.3,449.2 342.2,449.5 343.0,449.8 343.8,450.2 344.7,450.6 345.5,451.1 346.4,451.6 347.2,452.1 348.0,452.6 348.9,453.1 349.7,453.6 350.5,454.1 351.4,454.6 352.2,455.0 353.0,455.4 353.9,455.8 354.7,456.1 355.6,456.4 356.4,456.6 357.2,456.8 358.1,456.9 358.9,456.9 359.7,456.9 360.6,456.8 361.4,456.7 362.2,456.5 363.1,456.2 363.9,455.9 364.8,455.6 365.6,455.3 366.4,454.9 367.3,454.5 368.1,454.0 368.9,453.6 369.8,453.2 370.6,452.7 371.4,452.3 372.3,451.9 373.1,451.5 374.0,451.2 374.8,450.8 375.6,450.6 376.5,450.3 377.3,450.1 378.1,450.0 379.0,449.9 379.8,449.9 380.6,449.9 381.5,449.9 382.3,450.0 383.2,450.2 384.0,450.4 384.8,450.6 385.7,450.9 386.5,451.2 387.3,451.5 388.2,451.9 389.0,452.3 389.8,452.6 390.7,453.0 391.5,453.4 392.4,453.7 393.2,454.1 394.0,454.4 394.9,454.7 395.7,455.0 396.5,455.2 397.4,455.4 398.2,455.6 399.1,455.7 399.9,455.8 400.7,455.9 401.6,455.9 402.4,455.8 403.2,455.7 404.1,455.6 404.9,455.4 405.7,455.2 406.6,455.0 407.4,454.7 408.3,454.5 409.1,454.2 409.9,453.9 410.8,453.5 411.6,453.2 412.4,452.9 413.3,452.6 414.1,452.3 414.9,452.0 415.8,451.7 416.6,451.5 417.5,451.3 418.3,451.1 419.1,451.0 420.0,450.9 420.8,450.8 421.6,450.7 422.5,450.7 423.3,450.8 424.1,450.8 425.0,450.9 425.8,451.1 426.7,451.3 427.5,451.4 428.3,451.7 429.2,451.9 430.0,452.1 430.8,452.4 431.7,452.7 432.5,453.0 433.3,453.2 434.2,453.5 435.0,453.8 435.9,454.0 436.7,454.2 437.5,454.4 438.4,454.6 439.2,454.8 440.0,454.9 440.9,455.0 441.7,455.1 442.5,455.1 443.4,455.1 444.2,455.1 445.1,455.0 445.9,455.0 446.7,454.8 447.6,454.7 448.4,454.5 449.2,454.4 450.1,454.2 450.9,453.9 451.8,453.7 452.6,453.5 453.4,453.3 454.3,453.0 455.1,452.8 455.9,452.6 456.8,452.4 457.6,452.2 458.4,452.0 459.3,451.8 460.1,451.7 461.0,451.6 461.8,451.5 462.6,451.4 463.5,451.4 464.3,451.4 465.1,451.4 466.0,451.4 466.8,451.5 467.6,451.6 468.5,451.7 469.3,451.9 470.2,452.0 471.0,452.2 471.8,452.4 472.7,452.5 473.5,452.7 474.3,452.9 475.2,453.1 476.0,453.3 476.8,453.5 477.7,453.7 478.5,453.9 479.4,454.0 480.2,454.2 481.0,454.3 481.9,454.4 482.7,454.5 483.5,454.5 484.4,454.6 485.2,454.6 486.0,454.6 486.9,454.5 487.7,454.5 488.6,454.4 489.4,454.3 490.2,454.2 491.1,454.1 491.9,453.9 492.7,453.8 493.6,453.6 494.4,453.4 495.2,453.3 496.1,453.1 496.9,452.9 497.8,452.8 498.6,452.6 499.4,452.5 500.3,452.3 501.1,452.2 501.9,452.1 502.8,452.0 503.6,451.9 504.4,451.9 505.3,451.8 506.1,451.8 507.0,451.8 507.8,451.9 508.6,451.9 509.5,452.0 510.3,452.1 511.1,452.2 512.0,452.3 512.8,452.4 513.7,452.5 514.5,452.7 515.3,452.8 516.2,452.9 517.0,453.1 517.8,453.2 518.7,453.4 519.5,453.5 520.3,453.6 521.2,453.8 522.0,453.9 522.9,454.0 523.7,454.0 524.5,454.1 525.4,454.1 526.2,454.2 527.0,454.2 527.9,454.2 528.7,454.2 529.5,454.1 530.4,454.1 531.2,454.0 532.1,453.9 532.9,453.8 533.7,453.7 534.6,453.6 535.4,453.5 536.2,453.4 537.1,453.2 537.9,453.1 538.7,453.0 539.6,452.9 540.4,452.8 541.3,452.7 542.1,452.6 542.9,452.5 543.8,452.4 544.6,452.3 545.4,452.3 546.3,452.2 547.1,452.2 547.9,452.2 548.8,452.2 549.6,452.2 550.5,452.2 551.3,452.3 552.1,452.3 553.0,452.4 553.8,452.5 554.6,452.6 555.5,452.7 556.3,452.7 557.1,452.9 558.0,453.0 558.8,453.1 559.7,453.2 560.5,453.3 561.3,453.4 562.2,453.5 563.0,453.6 563.8,453.6 564.7,453.7 565.5,453.8 566.4,453.8 567.2,453.8 568.0,453.9 568.9,453.9 569.7,453.9 570.5,453.9 571.4,453.8 572.2,453.8 573.0,453.8 573.9,453.7 574.7,453.6 575.6,453.6 576.4,453.5 577.2,453.4 578.1,453.3 578.9,453.2 579.7,453.1 580.6,453.1 581.4,453.0 582.2,452.9 583.1,452.8 583.9,452.7 584.8,452.7 585.6,452.6 586.4,452.5 587.3,452.5 588.1,452.5 588.9,452.4 589.8,452.4 590.6,452.4 591.4,452.4 592.3,452.5 593.1,452.5 594.0,452.5 594.8,452.6 595.6,452.6 596.5,452.7 597.3,452.8 598.1,452.8 599.0,452.9 599.8,453.0 600.6,453.1 601.5,453.1 602.3,453.2 603.2,453.3 604.0,453.4 604.8,453.4 605.7,453.5 606.5,453.5 607.3,453.6 608.2,453.6 609.0,453.6 609.8,453.7 610.7,453.7 611.5,453.7 612.4,453.7 613.2,453.7 614.0,453.6 614.9,453.6 615.7,453.6 616.5,453.5 617.4,453.5 618.2,453.4 619.1,453.3 619.9,453.3 620.7,453.2 621.6,453.1 622.4,453.1 623.2,453.0 624.1,453.0 624.9,452.9 625.7,452.8 626.6,452.8 627.4,452.7 628.3,452.7 629.1,452.7 629.9,452.6 630.8,452.6 631.6,452.6 632.4,452.6 633.3,452.6 634.1,452.6 634.9,452.6 635.8,452.7 636.6,452.7 637.5,452.7 638.3,452.8 639.1,452.8 640.0,452.9 640.8,452.9 641.6,453.0 642.5,453.1 643.3,453.1 644.1,453.2 645.0,453.2 645.8,453.3 646.7,453.3 647.5,453.4 648.3,453.4 649.2,453.4 650.0,453.5 650.8,453.5 651.7,453.5 652.5,453.5 653.3,453.5 654.2,453.5 655.0,453.5 655.9,453.5 656.7,453.5 657.5,453.4 658.4,453.4 659.2,453.4 660.0,453.3 660.9,453.3 661.7,453.2 662.5,453.2 663.4,453.1 664.2,453.1 665.1,453.1 665.9,453.0 666.7,453.0 667.6,452.9 668.4,452.9 669.2,452.8 670.1,452.8 670.9,452.8 671.7,452.8 672.6,452.8 673.4,452.7 674.3,452.7 675.1,452.7 675.9,452.8 676.8,452.8 677.6,452.8 678.4,452.8 679.3,452.8 680.1,452.9 681.0,452.9 681.8,452.9 682.6,453.0 683.5,453.0 684.3,453.1 685.1,453.1 686.0,453.1 686.8,453.2 687.6,453.2 688.5,453.3 689.3,453.3 690.2,453.3 691.0,453.3 691.8,453.4 692.7,453.4 693.5,453.4 694.3,453.4 695.2,453.4 696.0,453.4 696.8,453.4 697.7,453.4 698.5,453.4 699.4,453.4 700.2,453.3 701.0,453.3 701.9,453.3 702.7,453.2"/>
<polyline stroke="#58523a" stroke-width="1.5" stroke-dasharray="9 2" stroke-linecap="butt" points="33.5,453.1 34.3,447.7 35.2,442.5 36.0,437.6 36.8,432.9 37.7,428.6 38.5,424.7 39.4,421.4 40.2,418.5 41.0,416.3 41.9,414.6 42.7,413.5 43.5,413.1 44.4,413.3 45.2,414.2 46.0,415.6 46.9,417.6 47.7,420.1 48.6,423.1 49.4,426.5 50.2,430.3 51.1,434.4 51.9,438.7 52.7,443.2 53.6,447.9 54.4,452.5 55.2,457.1 56.1,461.5 56.9,465.8 57.8,469.9 58.6,473.6 59.4,476.9 60.3,479.9 61.1,482.4 61.9,484.4 62.8,485.9 63.6,486.8 64.5,487.3 65.3,487.1 66.1,486.5 67.0,485.4 67.8,483.7 68.6,481.6 69.5,479.1 70.3,476.3 71.1,473.0 72.0,469.6 72.8,465.9 73.7,462.0 74.5,458.1 75.3,454.1 76.2,450.2 77.0,446.4 77.8,442.7 78.7,439.2 79.5,436.0 80.3,433.1 81.2,430.5 82.0,428.4 82.9,426.6 83.7,425.2 84.5,424.4 85.4,423.9 86.2,424.0 87.0,424.5 87.9,425.4 88.7,426.7 89.5,428.5 90.4,430.5 91.2,433.0 92.1,435.7 92.9,438.6 93.7,441.7 94.6,445.0 95.4,448.4 96.2,451.8 97.1,455.1 97.9,458.4 98.7,461.6 99.6,464.6 100.4,467.4 101.3,469.9 102.1,472.1 102.9,474.0 103.8,475.6 104.6,476.8 105.4,477.6 106.3,478.0 107.1,478.0 107.9,477.7 108.8,476.9 109.6,475.8 110.5,474.4 111.3,472.6 112.1,470.6 113.0,468.3 113.8,465.8 114.6,463.2 115.5,460.4 116.3,457.5 117.2,454.6 118.0,451.8 118.8,448.9 119.7,446.2 120.5,443.6 121.3,441.2 122.2,439.0 123.0,437.1 123.8,435.4 124.7,434.0 125.5,433.0 126.4,432.3 127.2,431.8 128.0,431.8 128.9,432.0 129.7,432.6 130.5,433.5 131.4,434.7 132.2,436.2 133.0,437.9 133.9,439.8 134.7,441.9 135.6,444.2 136.4,446.6 137.2,449.0 138.1,451.5 138.9,453.9 139.7,456.3 140.6,458.7 141.4,460.9 142.2,463.0 143.1,464.9 143.9,466.6 144.8,468.0 145.6,469.2 146.4,470.2 147.3,470.9 148.1,471.2 148.9,471.3 149.8,471.1 150.6,470.7 151.4,469.9 152.3,468.9 153.1,467.7 154.0,466.3 154.8,464.7 155.6,462.9 156.5,461.0 157.3,459.0 158.1,456.9 159.0,454.8 159.8,452.7 160.6,450.6 161.5,448.6 162.3,446.7 163.2,444.9 164.0,443.2 164.8,441.8 165.7,440.5 166.5,439.4 167.3,438.6 168.2,438.0 169.0,437.6 169.8,437.5 170.7,437.6 171.5,438.0 172.4,438.6 173.2,439.4 174.0,440.5 174.9,441.7 175.7,443.0 176.5,444.5 177.4,446.1 178.2,447.9 179.1,449.6 179.9,451.4 180.7,453.2 181.6,455.0 182.4,456.7 183.2,458.4 184.1,459.9 184.9,461.4 185.7,462.6 186.6,463.7 187.4,464.7 188.3,465.4 189.1,466.0 189.9,466.3 190.8,466.4 191.6,466.3 192.4,466.0 193.3,465.6 194.1,464.9 194.9,464.0 195.8,463.0 196.6,461.9 197.5,460.6 198.3,459.2 199.1,457.8 200.0,456.3 200.8,454.7 201.6,453.2 202.5,451.7 203.3,450.2 204.1,448.8 205.0,447.4 205.8,446.2 206.7,445.1 207.5,444.1 208.3,443.3 209.2,442.6 210.0,442.2 210.8,441.9 211.7,441.7 212.5,441.8 213.3,442.0 214.2,442.4 215.0,442.9 215.9,443.7 216.7,444.5 217.5,445.5 218.4,446.5 219.2,447.7 220.0,448.9 220.9,450.2 221.7,451.5 222.5,452.8 223.4,454.2 224.2,455.4 225.1,456.6 225.9,457.8 226.7,458.9 227.6,459.8 228.4,460.7 229.2,461.4 230.1,462.0 230.9,462.4 231.8,462.7 232.6,462.8 233.4,462.8 234.3,462.6 235.1,462.3 235.9,461.8 236.8,461.3 237.6,460.6 238.4,459.7 239.3,458.8 240.1,457.9 241.0,456.8 241.8,455.7 242.6,454.6 243.5,453.5 244.3,452.3 245.1,451.3 246.0,450.2 246.8,449.2 247.6,448.3 248.5,447.5 249.3,446.7 250.2,446.1 251.0,445.6 251.8,445.2 252.7,444.9 253.5,444.8 254.3,444.8 255.2,444.9 256.0,445.2 256.8,445.6 257.7,446.1 258.5,446.6 259.4,447.3 260.2,448.1 261.0,448.9 261.9,449.8 262.7,450.7 263.5,451.7 264.4,452.7 265.2,453.6 266.0,454.6 266.9,455.5 267.7,456.3 268.6,457.1 269.4,457.8 270.2,458.5 271.1,459.0 271.9,459.5 272.7,459.8 273.6,460.1 274.4,460.2 275.2,460.2 276.1,460.1 276.9,459.9 277.8,459.6 278.6,459.2 279.4,458.7 280.3,458.1 281.1,457.5 281.9,456.8 282.8,456.0 283.6,455.2 284.5,454.4 285.3,453.6 286.1,452.8 287.0,452.0 287.8,451.2 288.6,450.4 289.5,449.8 290.3,449.1 291.1,448.6 292.0,448.1 292.8,447.7 293.7,447.4 294.5,447.2 295.3,447.1 296.2,447.0 297.0,447.1 297.8,447.3 298.7,447.5 299.5,447.8 300.3,448.3 301.2,448.7 302.0,449.3 302.9,449.9 303.7,450.5 304.5,451.2 305.4,451.9 306.2,452.6 307.0,453.3 307.9,454.0 308.7,454.7 309.5,455.3 310.4,455.9 311.2,456.4 312.1,456.9 312.9,457.3 313.7,457.7 314.6,457.9 315.4,458.1 316.2,458.3 317.1,458.3 317.9,458.2 318.7,458.1 319.6,457.9 320.4,457.6 321.3,457.3 322.1,456.9 322.9,456.4 323.8,455.9 324.6,455.4 325.4,454.8 326.3,454.2 327.1,453.6 327.9,453.0 328.8,452.4 329.6,451.8 330.5,451.3 331.3,450.8 332.1,450.3 333.0,449.9 333.8,449.5 334.6,449.2 335.5,449.0 336.3,448.8 337.1,448.7 338.0,448.7 338.8,448.7 339.7,448.8 340.5,449.0 341.3,449.2 342.2,449.5 343.0,449.8 343.8,450.2 344.7,450.6 345.5,451.1 346.4,451.6 347.2,452.1 348.0,452.6 348.9,453.1 349.7,453.6 350.5,454.1 351.4,454.6 352.2,455.0 353.0,455.4 353.9,455.8 354.7,456.1 355.6,456.4 356.4,456.6 357.2,456.8 358.1,456.9 358.9,456.9 359.7,456.9 360.6,456.8 361.4,456.7 362.2,456.5 363.1,456.2 363.9,455.9 364.8,455.6 365.6,455.3 366.4,454.9 367.3,454.5 368.1,454.0 368.9,453.6 369.8,453.2 370.6,452.7 371.4,452.3 372.3,451.9 373.1,451.5 374.0,451.2 374.8,450.8 375.6,450.6 376.5,450.3 377.3,450.1 378.1,450.0 379.0,449.9 379.8,449.9 380.6,449.9 381.5,449.9 382.3,450.0 383.2,450.2 384.0,450.4 384.8,450.6 385.7,450.9 386.5,451.2 387.3,451.5 388.2,451.9 389.0,452.3 389.8,452.6 390.7,453.0 391.5,453.4 392.4,453.7 393.2,454.1 394.0,454.4 394.9,454.7 395.7,455.0 396.5,455.2 397.4,455.4 398.2,455.6 399.1,455.7 399.9,455.8 400.7,455.9 401.6,455.9 402.4,455.8 403.2,455.7 404.1,455.6 404.9,455.4 405.7,455.2 406.6,455.0 407.4,454.7 408.3,454.5 409.1,454.2 409.9,453.9 410.8,453.5 411.6,453.2 412.4,452.9 413.3,452.6 414.1,452.3 414.9,452.0 415.8,451.7 416.6,451.5 417.5,451.3 418.3,451.1 419.1,451.0 420.0,450.9 420.8,450.8 421.6,450.7 422.5,450.7 423.3,450.8 424.1,450.8 425.0,450.9 425.8,451.1 426.7,451.3 427.5,451.4 428.3,451.7 429.2,451.9 430.0,452.1 430.8,452.4 431.7,452.7 432.5,453.0 433.3,453.2 434.2,453.5 435.0,453.8 435.9,454.0 436.7,454.2 437.5,454.4 438.4,454.6 439.2,454.8 440.0,454.9 440.9,455.0 441.7,455.1 442.5,455.1 443.4,455.1 444.2,455.1 445.1,455.0 445.9,455.0 446.7,454.8 447.6,454.7 448.4,454.5 449.2,454.4 450.1,454.2 450.9,453.9 451.8,453.7 452.6,453.5 453.4,453.3 454.3,453.0 455.1,452.8 455.9,452.6 456.8,452.4 457.6,452.2 458.4,452.0 459.3,451.8 460.1,451.7 461.0,451.6 461.8,451.5 462.6,451.4 463.5,451.4 464.3,451.4 465.1,451.4 466.0,451.4 466.8,451.5 467.6,451.6 468.5,451.7 469.3,451.9 470.2,452.0 471.0,452.2 471.8,452.4 472.7,452.5 473.5,452.7 474.3,452.9 475.2,453.1 476.0,453.3 476.8,453.5 477.7,453.7 478.5,453.9 479.4,454.0 480.2,454.2 481.0,454.3 481.9,454.4 482.7,454.5 483.5,454.5 484.4,454.6 485.2,454.6 486.0,454.6 486.9,454.5 487.7,454.5 488.6,454.4 489.4,454.3 490.2,454.2 491.1,454.1 491.9,453.9 492.7,453.8 493.6,453.6 494.4,453.4 495.2,453.3 496.1,453.1 496.9,452.9 497.8,452.8 498.6,452.6 499.4,452.5 500.3,452.3 501.1,452.2 501.9,452.1 502.8,452.0 503.6,451.9 504.4,451.9 505.3,451.8 506.1,451.8 507.0,451.8 507.8,451.9 508.6,451.9 509.5,452.0 510.3,452.1 511.1,452.2 512.0,452.3 512.8,452.4 513.7,452.5 514.5,452.7 515.3,452.8 516.2,452.9 517.0,453.1 517.8,453.2 518.7,453.4 519.5,453.5 520.3,453.6 521.2,453.8 522.0,453.9 522.9,454.0 523.7,454.0 524.5,454.1 525.4,454.1 526.2,454.2 527.0,454.2 527.9,454.2 528.7,454.2 529.5,454.1 530.4,454.1 531.2,454.0 532.1,453.9 532.9,453.8 533.7,453.7 534.6,453.6 535.4,453.5 536.2,453.4 537.1,453.2 537.9,453.1 538.7,453.0 539.6,452.9 540.4,452.8 541.3,452.7 542.1,452.6 542.9,452.5 543.8,452.4 544.6,452.3 545.4,452.3 546.3,452.2 547.1,452.2 547.9,452.2 548.8,452.2 549.6,452.2 550.5,452.2 551.3,452.3 552.1,452.3 553.0,452.4 553.8,452.5 554.6,452.6 555.5,452.7 556.3,452.7 557.1,452.9 558.0,453.0 558.8,453.1 559.7,453.2 560.5,453.3 561.3,453.4 562.2,453.5 563.0,453.6 563.8,453.6 564.7,453.7 565.5,453.8 566.4,453.8 567.2,453.8 568.0,453.9 568.9,453.9 569.7,453.9 570.5,453.9 571.4,453.8 572.2,453.8 573.0,453.8 573.9,453.7 574.7,453.6 575.6,453.6 576.4,453.5 577.2,453.4 578.1,453.3 578.9,453.2 579.7,453.1 580.6,453.1 581.4,453.0 582.2,452.9 583.1,452.8 583.9,452.7 584.8,452.7 585.6,452.6 586.4,452.5 587.3,452.5 588.1,452.5 588.9,452.4 589.8,452.4 590.6,452.4 591.4,452.4 592.3,452.5 593.1,452.5 594.0,452.5 594.8,452.6 595.6,452.6 596.5,452.7 597.3,452.8 598.1,452.8 599.0,452.9 599.8,453.0 600.6,453.1 601.5,453.1 602.3,453.2 603.2,453.3 604.0,453.4 604.8,453.4 605.7,453.5 606.5,453.5 607.3,453.6 608.2,453.6 609.0,453.6 609.8,453.7 610.7,453.7 611.5,453.7 612.4,453.7 613.2,453.7 614.0,453.6 614.9,453.6 615.7,453.6 616.5,453.5 617.4,453.5 618.2,453.4 619.1,453.3 619.9,453.3 620.7,453.2 621.6,453.1 622.4,453.1 623.2,453.0 624.1,453.0 624.9,452.9 625.7,452.8 626.6,452.8 627.4,452.7 628.3,452.7 629.1,452.7 629.9,452.6 630.8,452.6 631.6,452.6 632.4,452.6 633.3,452.6 634.1,452.6 634.9,452.6 635.8,452.7 636.6,452.7 637.5,452.7 638.3,452.8 639.1,452.8 640.0,452.9 640.8,452.9 641.6,453.0 642.5,453.1 643.3,453.1 644.1,453.2 645.0,453.2 645.8,453.3 646.7,453.3 647.5,453.4 648.3,453.4 649.2,453.4 650.0,453.5 650.8,453.5 651.7,453.5 652.5,453.5 653.3,453.5 654.2,453.5 655.0,453.5 655.9,453.5 656.7,453.5 657.5,453.4 658.4,453.4 659.2,453.4 660.0,453.3 660.9,453.3 661.7,453.2 662.5,453.2 663.4,453.1 664.2,453.1 665.1,453.1 665.9,453.0 666.7,453.0 667.6,452.9 668.4,452.9 669.2,452.8 670.1,452.8 670.9,452.8 671.7,452.8 672.6,452.8 673.4,452.7 674.3,452.7 675.1,452.7 675.9,452.8 676.8,452.8 677.6,452.8 678.4,452.8 679.3,452.8 680.1,452.9 681.0,452.9 681.8,452.9 682.6,453.0 683.5,453.0 684.3,453.1 685.1,453.1 686.0,453.1 686.8,453.2 687.6,453.2 688.5,453.3 689.3,453.3 690.2,453.3 691.0,453.3 691.8,453.4 692.7,453.4 693.5,453.4 694.3,453.4 695.2,453.4 696.0,453.4 696.8,453.4 697.7,453.4 698.5,453.4 699.4,453.4 700.2,453.3 701.0,453.3 701.9,453.3 702.7,453.2"/>
</g>
<g font-family="'Liberation Sans', sans-serif" font-size="11.2" fill="#2a2718" stroke="#2a2718" stroke-width="0.2" text-anchor="middle">
<text transform="translate(33.5,508) scale(0.72,1)">0</text>
<text transform="translate(100.4,508) scale(0.72,1)">10</text>
<text transform="translate(167.3,508) scale(0.72,1)">20</text>
<text transform="translate(234.3,508) scale(0.72,1)">30</text>
<text transform="translate(301.2,508) scale(0.72,1)">40</text>
<text transform="translate(368.1,508) scale(0.72,1)">50</text>
<text transform="translate(435.0,508) scale(0.72,1)">60</text>
<text transform="translate(501.9,508) scale(0.72,1)">70</text>
<text transform="translate(568.9,508) scale(0.72,1)">80</text>
<text transform="translate(635.8,508) scale(0.72,1)">90</text>
<text transform="translate(702.7,508) scale(0.72,1)">100</text>
<text transform="translate(14.7,107.1) rotate(-90) scale(0.72,1)">15</text>
<text transform="translate(14.7,161.1) rotate(-90) scale(0.72,1)">10</text>
<text transform="translate(14.7,215.1) rotate(-90) scale(0.72,1)">5</text>
<text transform="translate(14.7,269.1) rotate(-90) scale(0.72,1)">0</text>
<text transform="translate(14.7,323.1) rotate(-90) scale(0.72,1)">-5</text>
<text transform="translate(14.7,377.1) rotate(-90) scale(0.72,1)">-10</text>
<text transform="translate(14.7,431.1) rotate(-90) scale(0.72,1)">-15</text>
<text transform="translate(14.7,485.1) rotate(-90) scale(0.72,1)">-20</text>
</g>
</svg>
<div id="status"><span class="t">X= 102.182698;  Y= 11.516873</span>
<span class="t" style="left:154px">*</span>
<div class="sep" style="left:148px"></div><div class="sep" style="left:180px"></div><div class="sep" style="left:269px"></div><div class="sep" style="left:359px"></div><div class="sep" style="left:656px"></div>
</div>
<svg id="icons" width="726" height="531" viewBox="0 0 726 531" style="position:absolute;left:0;top:0" font-family="'Liberation Sans', sans-serif">
<!-- toolbar separators -->
<g stroke="#c6c2b2" stroke-width="1.2">
<line x1="76.6" y1="40" x2="76.6" y2="60"/><line x1="126.4" y1="40" x2="126.4" y2="60"/><line x1="222.6" y1="40" x2="222.6" y2="60"/><line x1="366" y1="40" x2="366" y2="60"/><line x1="437.4" y1="40" x2="437.4" y2="60"/><line x1="533.3" y1="40" x2="533.3" y2="60"/>
</g>
<!-- 1 new table -->
<g>
<rect x="9.6" y="43.8" width="15.8" height="12.4" rx="1.6" fill="#fdfdfb" stroke="#a2a892" stroke-width="1.2"/>
<path d="M9.2 46.6 L12 43.6 L9.2 43.6Z" fill="#ece9d8"/><path d="M9.6 46.4 L12.2 46.4 L12.2 43.8" fill="none" stroke="#6a6a58" stroke-width="0.9"/>
<g fill="#bfe3fb"><rect x="12.6" y="46" width="2" height="5.6"/><rect x="15.6" y="45.6" width="2" height="6"/><rect x="18.6" y="45.6" width="2" height="6"/><rect x="21.4" y="45.6" width="2.4" height="6"/><rect x="11.4" y="49.6" width="12.6" height="1.6"/><rect x="11.4" y="52.4" width="12.6" height="1.6"/></g>
<g fill="#f6e3bd"><rect x="14.6" y="46" width="1" height="3"/><rect x="17.6" y="46" width="1" height="3"/><rect x="21.8" y="47" width="1.4" height="2"/></g>
</g>
<!-- 2 open -->
<g fill="none" stroke-linejoin="round">
<path d="M32.6 57.6 L32.6 47.6 L33.8 46.4 L37 46.4" stroke="#e2953f" stroke-width="1.3"/>
<path d="M32.6 58 L42.4 58" stroke="#ff9a6c" stroke-width="1.5"/>
<path d="M42.4 58 L49.6 51 L44.6 51" stroke="#f0a054" stroke-width="1.3"/>
<path d="M33.2 57 L40.6 50" stroke="#d98b36" stroke-width="1.4"/>
<rect x="36.2" y="46" width="6.6" height="3.2" fill="#a9d3f9" stroke="#4a74ea" stroke-width="1"/>
<path d="M41.4 42.8 L46.8 47.6 L41.4 52.2Z" fill="#3a66f0" stroke="#3a66f0" stroke-width="0.6"/>
<rect x="42" y="46.4" width="1.8" height="2.4" fill="#9fc8f6" stroke="none"/>
</g>
<!-- 3 save -->
<g>
<path d="M55.2 42.2 L71 42.2 L71 57.6 L57 57.6 L55.2 55.8Z" fill="#6785e9"/>
<rect x="55.2" y="42.2" width="1.4" height="13.6" fill="#4a68dc"/>
<rect x="58" y="43" width="10.4" height="6.2" fill="#fbfbfa"/><rect x="59" y="44.2" width="8.4" height="4.4" fill="#d6d3cd"/>
<rect x="58.6" y="51.2" width="9.4" height="6.2" fill="#8e9382" stroke="#3f391f" stroke-width="1"/>
<rect x="60.8" y="52.8" width="1.8" height="3" fill="#0f3ff2"/>
<rect x="65" y="52" width="2" height="5" fill="#a6aa9a"/>
<rect x="69.6" y="55" width="1.4" height="2.6" fill="#2a52ea"/>
<rect x="69.2" y="44.4" width="0.9" height="1.4" fill="#dfe6fb"/>
</g>
<!-- 4 add curve folder -->
<g fill="none">
<path d="M82.6 56.4 L82.6 45.6 L90.2 45.6 L91.6 48.8 L98.6 48.8 L98.6 52 M82.6 56.4 L93 56.4" stroke="#d8983a" stroke-width="1.3" stroke-linejoin="round"/>
<path d="M83.4 55.6 L90.6 48.6" stroke="#f2b27c" stroke-width="1.1"/>
<path d="M83.2 51.6 L87.6 47.2 L90 49.2 L98.2 42.4" stroke="#ff3410" stroke-width="1.5" stroke-linejoin="round"/>
<path d="M95.6 53.4 L95.6 58.2 M93.2 55.8 L98 55.8" stroke="#2454ee" stroke-width="1.4"/>
</g>
<!-- 5 curve -->
<g fill="none">
<path d="M108 46.5 L117.8 46.5" stroke="#ff4410" stroke-width="1.9"/>
<path d="M105.3 57.4 L110.8 51.4 L114 53.8 L121.6 46.8" stroke="#5272ea" stroke-width="1.4" stroke-linejoin="round"/>
</g>
<!-- 6 save chart -->
<g>
<rect x="131" y="42" width="11" height="10.4" fill="#5b7ce8"/>
<rect x="133.4" y="42.6" width="6.6" height="4.4" fill="#f4f4f0"/><rect x="135" y="43.4" width="3.6" height="3" fill="#cfccc6"/>
<rect x="132.8" y="47.6" width="15" height="10.2" rx="1" fill="#fbfcfb" stroke="#a1a892" stroke-width="1.2"/>
<path d="M132.4 49.8 L134.8 49.8 L134.8 47.4" fill="none" stroke="#5d5a44" stroke-width="0.9"/>
<g fill="#c3e5fb"><rect x="138" y="49" width="1.6" height="8"/><rect x="141" y="49" width="1.6" height="8"/><rect x="144" y="49" width="1.6" height="8"/><rect x="135" y="52" width="11.6" height="1.2"/><rect x="135" y="55" width="11.6" height="1.2"/></g>
<path d="M134.6 56 L139.4 51 L142 54 L146.2 50.4" fill="none" stroke="#f0823e" stroke-width="1.3" stroke-linejoin="round"/>
</g>
<!-- 7 print -->
<g>
<rect x="154.4" y="47" width="16.4" height="9" rx="2" fill="#d8d5cc" stroke="#b9b9a9" stroke-width="1"/>
<rect x="154.6" y="50.4" width="16" height="1.4" fill="#efeee6"/>
<rect x="156.6" y="42.4" width="12" height="6" fill="#c5e6fb" stroke="#dfe9ea" stroke-width="0.6"/>
<path d="M157.6 47.2 Q160 43.6 165.4 42.8" fill="none" stroke="#f25a22" stroke-width="1.3"/>
<rect x="156.6" y="47.6" width="12" height="1.1" fill="#9a9f8a"/>
<rect x="156.6" y="54" width="12" height="4.4" rx="1" fill="#c2e4fa" stroke="#b7bba8" stroke-width="0.8"/>
<rect x="156.4" y="53.6" width="12.4" height="1.1" fill="#8f947f"/>
<rect x="159" y="53.8" width="1" height="1" fill="#4a66e8"/><rect x="161.6" y="53.8" width="1" height="1" fill="#4a66e8"/>
</g>
<!-- 8 copy chart -->
<g>
<rect x="177.8" y="42.8" width="15" height="9.6" rx="1.4" fill="#fbfbf8" stroke="#a4aa94" stroke-width="1.1"/>
<path d="M177.4 45.6 L180 45.6 L180 42.6" fill="none" stroke="#5d5a44" stroke-width="0.9"/>
<rect x="179.8" y="46.8" width="15" height="11" rx="1" fill="#fbfcfb" stroke="#959c85" stroke-width="1.2"/>
<g fill="#c3e5fb"><rect x="185" y="49" width="1.8" height="7.4"/><rect x="188.4" y="49" width="1.8" height="7.4"/><rect x="191.6" y="49" width="1.6" height="7.4"/><rect x="181.6" y="52" width="12" height="1.2"/></g>
<path d="M181.6 55 L186.2 50.4 L189 53.6 L193.4 49" fill="none" stroke="#f4501c" stroke-width="1.4" stroke-linejoin="round"/>
</g>
<!-- 9 camera -->
<g>
<rect x="201.4" y="43.8" width="16" height="12.4" rx="1" fill="#d9d8cb" stroke="#9aa18a" stroke-width="1.3"/>
<rect x="202.2" y="44.6" width="14.4" height="2.6" fill="#eeede4"/>
<rect x="203.4" y="44.4" width="3.4" height="0.9" fill="#55523c"/><rect x="208.6" y="44.4" width="2.2" height="0.9" fill="#55523c"/><rect x="212.6" y="44.4" width="2" height="0.9" fill="#55523c"/>
<rect x="202.2" y="52.6" width="14.4" height="2.8" fill="#cccbb9"/>
<circle cx="210.2" cy="50.4" r="2.4" fill="#a7d4f7" stroke="#3f3b25" stroke-width="1.2"/>
<circle cx="210.2" cy="50.2" r="0.9" fill="#e8f4fd"/>
</g>
<!-- 10 back -->
<path d="M230.2 49.8 L235.4 45 L235.4 48 L240.4 48 Q242.4 48 242.4 49.8 Q242.4 51.6 240.4 51.6 L235.4 51.6 L235.4 54.4Z" fill="#c3d9f9" stroke="#3f6ef0" stroke-width="1.2" stroke-linejoin="round"/>
<!-- 11 forward -->
<path d="M264 49.8 L258.8 45 L258.8 48 L253 48 L253 51.6 L258.8 51.6 L258.8 54.4Z" fill="#cbcbbf" stroke="#c0c0b3" stroke-width="0.9" stroke-linejoin="round"/>
<!-- 12 fit -->
<g>
<rect x="274.5" y="42.6" width="15" height="15.6" fill="#edeadb" stroke="#e0932f" stroke-width="1.2"/>
<rect x="273.9" y="56.8" width="16.2" height="2" fill="#ff9a6a"/>
<g stroke="#5e583e" stroke-width="0.8" fill="#4e4830">
<path d="M280.4 48.2 L276.8 44.8 M283.8 48.2 L287.4 44.8 M280.4 52.2 L276.8 55.4 M283.8 52.2 L287.4 55.4" fill="none"/>
<path d="M276.3 44.3 L278.4 44.5 L276.5 46.4Z" stroke-width="0.5"/><path d="M287.9 44.3 L285.8 44.5 L287.7 46.4Z" stroke-width="0.5"/><path d="M276.3 55.9 L278.6 55.8 L276.4 53.8Z" stroke-width="0.7"/><path d="M287.9 55.9 L285.6 55.8 L287.8 53.8Z" stroke-width="0.7"/>
</g>
</g>
<!-- 13 gray zoom rect -->
<g>
<rect x="297.8" y="42.8" width="15.6" height="15.2" fill="#f1efe5" stroke="#cbcbbd" stroke-width="1" stroke-dasharray="2 0.8"/>
<rect x="298.6" y="43.6" width="4.4" height="4.4" fill="#edebde" stroke="#c9e4f5" stroke-width="0.9"/>
<path d="M304 48.4 L304 57 M298.6 48.8 L303.6 48.8 M304 45.8 L312.6 45.8" stroke="#d6d6ca" stroke-width="0.9" fill="none"/>
<path d="M301 51.4 L301 55.2 M307 45.8 L310 45.8" stroke="#b9bbaa" stroke-width="0.9" fill="none"/>
</g>
<!-- 14 -->
<g stroke="#d3d6c7" stroke-width="1.4">
<line x1="321" y1="42" x2="321" y2="58"/><line x1="326.6" y1="42" x2="326.6" y2="58"/><line x1="330.2" y1="42" x2="330.2" y2="58"/><line x1="335.8" y1="42" x2="335.8" y2="58"/>
<path d="M321 50 L326.6 50 M330.2 50 L335.8 50" stroke="#a2ab92" stroke-width="0.9"/>
</g>
<!-- 15 -->
<g>
<rect x="343.4" y="42.2" width="16.6" height="1" fill="#bcbfae"/><rect x="343.4" y="42.2" width="2" height="1" fill="#8a917a"/>
<rect x="343.4" y="57" width="16.6" height="1.2" fill="#cccec0"/>
<rect x="343.4" y="49" width="16.6" height="2.6" fill="#bde3f8"/>
<path d="M343.4 48.4 L360 48.4 M343.4 52.4 L360 52.4" stroke="#c0c3b3" stroke-width="0.9" stroke-dasharray="2.2 1"/>
<path d="M351.6 43 L351.6 48 M351.6 53 L351.6 57" stroke="#a2ab92" stroke-width="1"/>
</g>
<!-- 16 active crosshair -->
<g>
<rect x="370.5" y="41.5" width="16" height="16.6" fill="#bce0fc" stroke="#6282e8" stroke-width="1.1"/>
<rect x="370" y="57" width="17" height="1.8" fill="#6282e8"/>
<path d="M371.2 50 L386 50 M378.6 42.2 L378.6 57" stroke="#e4f1fa" stroke-width="1.6" fill="none"/>
<path d="M372 50 L377.6 50 M379.6 50 L385.2 50 M378.6 43 L378.6 49 M378.6 51.2 L378.6 56.8" stroke="#4e4828" stroke-width="0.8" fill="none"/>
<path d="M373.4 50 L376 49.3 L376 50.7Z M383.8 50 L381.2 49.3 L381.2 50.7Z M378.6 44.6 L377.9 47 L379.3 47Z M378.6 55.6 L377.9 53.2 L379.3 53.2Z" fill="#4e4828" stroke="#4e4828" stroke-width="0.5"/>
<circle cx="378.6" cy="50.1" r="0.9" fill="#fff"/>
</g>
<!-- 17 target -->
<g fill="none">
<circle cx="401.5" cy="50" r="5.3" stroke="#f0a040" stroke-width="1.1"/>
<rect x="398.2" y="44.2" width="6.6" height="11.6" rx="1.4" fill="#c3e3fb" stroke="#5474e4" stroke-width="1.1"/>
<path d="M394 50 L409.6 50" stroke="#f2a030" stroke-width="1.1"/>
<path d="M398.6 50 L404.4 50" stroke="#5a5030" stroke-width="1.1"/>
<path d="M401.5 41.8 L401.5 58.2" stroke="#ff3010" stroke-width="1.2"/>
<circle cx="396.4" cy="50" r="0.8" fill="#ff3010"/><circle cx="406.6" cy="50" r="0.8" fill="#ff3010"/>
</g>
<!-- 18 zoom window -->
<g>
<rect x="416.8" y="42.9" width="14.4" height="10.4" rx="0.8" fill="#fcfcfa" stroke="#a3aa93" stroke-width="1.4"/>
<g fill="#c3e5fb"><rect x="418.6" y="45" width="11" height="1.2"/><rect x="418.6" y="47.6" width="11" height="1"/><rect x="419" y="44.4" width="1" height="6.4"/><rect x="425" y="44.2" width="1" height="2"/><rect x="428" y="44.2" width="1" height="2"/></g>
<circle cx="425.6" cy="50.9" r="3.4" fill="#bfe1fb" stroke="#b2b6a3" stroke-width="1.2"/>
<path d="M425.6 48.8 L426.3 50.2 L427.8 50.4 L426.6 51.4 L427 53 L425.6 52.2 L424.2 53 L424.6 51.4 L423.4 50.4 L424.9 50.2Z" fill="#4666f0"/>
<path d="M428.6 54 L432.4 57.6" stroke="#5a4a2a" stroke-width="2.2" stroke-linecap="round"/>
<path d="M429 54 L432.4 57.2" stroke="#e8962e" stroke-width="1.2" stroke-linecap="round"/>
</g>
<!-- 19 y=f(x) -->
<g>
<text x="442.6" y="49" font-size="7.4" font-weight="bold" fill="#3f3820" textLength="16.6" lengthAdjust="spacingAndGlyphs">y=f(x)</text>
<path d="M442.6 57.2 L448 51 L451 53.6 L459.2 46.4" fill="none" stroke="#ff3410" stroke-width="1.4" stroke-linejoin="round"/>
<path d="M456 53.2 L456 58 M453.6 55.6 L458.4 55.6" stroke="#2454ee" stroke-width="1.4"/>
</g>
<!-- 20 damped -->
<g fill="none">
<path d="M465 42.4 L474 47 L483.4 47 M465 57.6 L474 53 L483.4 53" stroke="#c4c4b6" stroke-width="1.2"/>
<path d="M465.4 56 L468.4 44.4 L470.6 54.2 L473 47.4 L475.4 51.6 L477.6 49.6 L480.2 48.4 L483 50" stroke="#ff3410" stroke-width="1.2" stroke-linejoin="round"/>
</g>
<!-- 21 grid -->
<g>
<rect x="489" y="42.4" width="15.4" height="12.4" fill="#a3aa93"/>
<rect x="490.0" y="43.4" width="2.1" height="2.1" fill="#f6fbfe"/><rect x="493.0" y="43.4" width="2.1" height="2.1" fill="#dbeefa"/><rect x="496.0" y="43.4" width="2.1" height="2.1" fill="#f6fbfe"/><rect x="499.0" y="43.4" width="2.1" height="2.1" fill="#dbeefa"/><rect x="502.0" y="43.4" width="2.0" height="2.1" fill="#f6fbfe"/><rect x="490.0" y="46.4" width="2.1" height="2.1" fill="#dbeefa"/><rect x="493.0" y="46.4" width="2.1" height="2.1" fill="#f6fbfe"/><rect x="496.0" y="46.4" width="2.1" height="2.1" fill="#dbeefa"/><rect x="499.0" y="46.4" width="2.1" height="2.1" fill="#f6fbfe"/><rect x="502.0" y="46.4" width="2.0" height="2.1" fill="#dbeefa"/><rect x="490.0" y="49.4" width="2.1" height="2.1" fill="#f6fbfe"/><rect x="493.0" y="49.4" width="2.1" height="2.1" fill="#dbeefa"/><rect x="496.0" y="49.4" width="2.1" height="2.1" fill="#f6fbfe"/><rect x="499.0" y="49.4" width="2.1" height="2.1" fill="#dbeefa"/><rect x="502.0" y="49.4" width="2.0" height="2.1" fill="#f6fbfe"/><rect x="490.0" y="52.4" width="2.1" height="2.1" fill="#dbeefa"/>
<rect x="493" y="52.8" width="13" height="5.6" rx="1.2" fill="#e9e8dc" stroke="#4e4830" stroke-width="1.2"/>
<text x="494.6" y="57.4" font-size="4.6" font-weight="bold" fill="#5c573f">1.04</text>
</g>
<!-- 22 -->
<g fill="none">
<path d="M512.4 57.6 L528.6 42.4" stroke="#4e4830" stroke-width="1.3"/>
<g stroke="#6282f0" stroke-width="1.2"><path d="M514.4 49.8 L516.8 49.8 M524.6 49.8 L527 49.8 M520.6 43.8 L520.6 46.2 M520.6 53.8 L520.6 56.2 M516 45.4 L517.6 47 M523.8 52.8 L525.6 54.6"/></g>
<circle cx="520.7" cy="50" r="1.7" fill="#fff" stroke="#ff3410" stroke-width="1.2"/>
</g>
<!-- 23 window + pencil -->
<g>
<rect x="538.9" y="42.9" width="14.6" height="10.2" rx="0.8" fill="#fcfcfa" stroke="#a3aa93" stroke-width="1.4"/>
<g fill="#c3e5fb"><rect x="540.6" y="45" width="11.2" height="1.2"/><rect x="540.6" y="47.6" width="11.2" height="1"/><rect x="541" y="44.4" width="1" height="6.4"/><rect x="547" y="44.2" width="1" height="2"/><rect x="550" y="44.2" width="1" height="2"/><rect x="540.6" y="50.2" width="4" height="1"/></g>
<path d="M546 49.4 L553 56.8" stroke="#f0a040" stroke-width="2.2"/>
<path d="M546.8 49 L553.6 56.2" stroke="#fbe2c8" stroke-width="0.8"/>
<path d="M545.2 48.6 L546.6 50" stroke="#4e4830" stroke-width="1.8"/>
<circle cx="553.2" cy="57.2" r="1.3" fill="#ff3010"/>
</g>
<!-- 24 gear -->
<g>
<g fill="#f1f6fa" stroke="#484028" stroke-width="1.1"><circle cx="576.3" cy="50.2" r="1.9"/><circle cx="574.5" cy="54.5" r="1.9"/><circle cx="570.2" cy="56.3" r="1.9"/><circle cx="565.9" cy="54.5" r="1.9"/><circle cx="564.1" cy="50.2" r="1.9"/><circle cx="565.9" cy="45.9" r="1.9"/><circle cx="570.2" cy="44.1" r="1.9"/><circle cx="574.5" cy="45.9" r="1.9"/></g>
<circle cx="570.2" cy="50.2" r="5.6" fill="#f1f6fa"/>
<path d="M570.2 44.800000000000004 A5.4 5.4 0 0 0 570.2 55.6 L569.2 52.2 L567.8000000000001 50.2 L569.2 48.2Z" fill="#b3d7f8"/>
<g fill="#f08a3c"><circle cx="573.4" cy="46.8" r="0.8"/><circle cx="575.2" cy="50.2" r="0.8"/><circle cx="573.4" cy="53.8" r="0.8"/><circle cx="572.8" cy="48.8" r="0.6"/><circle cx="573" cy="51.8" r="0.6"/></g>
<circle cx="570.2" cy="50.2" r="1.8" fill="#fbfbf8" stroke="#484028" stroke-width="1.1"/>
</g>
<!-- 25 help -->
<g>
<path d="M590 42.4 L597.2 42.4 L602 47 L602 53.6 L597.2 58.2 L590 58.2 L585.2 53.6 L585.2 47Z" fill="#c9c6ba" stroke="#6a8af0" stroke-width="1.3" stroke-linejoin="round"/>
<text transform="translate(593.6,57) scale(0.88,1)" font-size="17.5" font-weight="bold" fill="#f4faff" text-anchor="middle">?</text>
</g>
<!-- 26 exit -->
<g>
<rect x="608.4" y="42.2" width="10.4" height="16" fill="#504020" stroke="#e8902e" stroke-width="0.9"/>
<rect x="611" y="47.2" width="7.2" height="10.6" fill="#d29640"/>
<rect x="611" y="47.2" width="1.2" height="10.6" fill="#e6a850"/>
<rect x="611.2" y="43.8" width="5.6" height="2.1" fill="#f9e0d6"/>
<rect x="614.2" y="48" width="0.9" height="9.4" fill="#7a5824"/>
<path d="M608.2 58.3 L618.9 58.3 L618.9 46.4" fill="none" stroke="#ff3410" stroke-width="1"/>
<path d="M620 50 L623.4 46.2 L623.4 48.4 L626 50 L623.4 51.6 L623.4 53.8Z" fill="#b7d2f9" stroke="#3563f0" stroke-width="1.1" stroke-linejoin="round"/>
</g>
<!-- app icon -->
<g>
<path d="M10.4 6.2 L12.6 7.4 L14.4 8.2 L15.2 10.2 L16 12 L15 13.8 L14.6 15.6 L12.8 16.6 L11 17.4 L9 16.8 L7.4 15.8 L6.4 14 L5.4 12 L6.4 10.2 L7 8.4 L8.8 7.4Z" fill="#a67f24"/>
<circle cx="10.6" cy="11.8" r="4" fill="#c9c9b3"/>
<rect x="9.4" y="6.6" width="2.4" height="1.4" fill="#f09a20"/>
<rect x="8.6" y="10.8" width="1.2" height="1.2" fill="#f07a30"/><rect x="11.6" y="10.8" width="1.2" height="1.2" fill="#f07a30"/>
<rect x="7" y="13.6" width="1.6" height="1.4" fill="#f09a20"/>
<rect x="10.2" y="11.6" width="1.4" height="3.6" fill="#7f96ee"/><rect x="8.8" y="14.4" width="3.6" height="1.2" fill="#8aa0f0"/>
<rect x="13" y="10" width="1.4" height="2.6" fill="#8aa0f0"/>
<rect x="9" y="8.4" width="3" height="1.6" fill="#dcebf2"/>
<path d="M5.4 17.6 L5.4 15.2 L8 14.6" fill="none" stroke="#b4bdf3" stroke-width="0.9"/>
<rect x="15" y="14.8" width="1" height="1" fill="#b4bdf3"/>
</g>
<!-- caption glyphs -->
<rect x="675" y="14.4" width="5.4" height="1.9" fill="#fff"/>
<path d="M678.4 12.6 L681.4 9.6" stroke="#1243e6" stroke-width="1.4" opacity="0.5"/>
<rect x="692.9" y="9.2" width="7.6" height="6.2" fill="none" stroke="#fff" stroke-width="1.1"/><rect x="692.4" y="8.2" width="8.6" height="1.7" fill="#fff"/>
<rect x="696" y="11.6" width="2" height="1.6" fill="#4b6fe8"/>
<path d="M709.6 8.4 L717.4 16.2 M717.4 8.4 L709.6 16.2" stroke="#fff" stroke-width="1.4" stroke-linecap="round"/>
<!-- status swatches -->
<g>
<rect x="367.4" y="517.6" width="9.4" height="7" rx="1.6" fill="#d0943a" stroke="#f9b58f" stroke-width="1"/>
<rect x="381.2" y="517.6" width="9" height="7" rx="1" fill="#ff30f4" stroke="#fbb0ee" stroke-width="1"/>
<rect x="394.6" y="517.6" width="9" height="7" rx="1" fill="#30c8fc" stroke="#bfeafc" stroke-width="1"/>
<rect x="408" y="517.6" width="9" height="7" rx="1.6" fill="#ff4210" stroke="#fba680" stroke-width="1"/>
<rect x="421.2" y="517.6" width="9.4" height="7" rx="1" fill="#cfccbf"/><rect x="421.6" y="519.4" width="8.8" height="4" fill="#20fb24"/>
<rect x="434.8" y="517.6" width="9.2" height="7" rx="1.6" fill="#1245e4" stroke="#8ea2ea" stroke-width="1"/>
<rect x="448.4" y="517.4" width="9.2" height="7.6" rx="1" fill="#d0943a"/><rect x="448.8" y="517.4" width="8.4" height="1.6" fill="#c4c2b0"/><rect x="448.4" y="520" width="9.2" height="1" fill="#55502f"/><rect x="448.4" y="523" width="9.2" height="0.9" fill="#6b5a2f"/>
</g>
<!-- status icons -->
<g fill="none">
<path d="M667.6 525.6 L667.6 516 L678 516" stroke="#3563f0" stroke-width="1" stroke-dasharray="2 1"/>
<circle cx="672.8" cy="520.6" r="3" fill="#c4e4fa" stroke="#a9ad9a" stroke-width="1.1"/>
<path d="M675.2 523.2 L677.6 525.6" stroke="#e8902e" stroke-width="1.6" stroke-linecap="round"/>
<path d="M682.8 525.6 L682.8 516 L693 516" stroke="#3563f0" stroke-width="1" stroke-dasharray="2 1"/>
<path d="M685.6 522 L685.6 518.4 L687 517.4 L688.4 517 L689.8 517.2 L691.2 518 L691.6 521 L691 525 L687 525.4Z" fill="#f7f7f3" stroke="#b9b9ab" stroke-width="0.9"/>
<path d="M697.6 515 L697.6 526 M697.6 525.6 L708.6 525.6" stroke="#3f3b25" stroke-width="1"/>
<g fill="#b9b6a4" stroke="none"><rect x="720" y="516.6" width="1.4" height="1.4"/><rect x="717.4" y="519.4" width="1.4" height="1.4"/><rect x="720" y="519.4" width="1.4" height="1.4"/><rect x="714.8" y="522.2" width="1.4" height="1.4"/><rect x="717.4" y="522.2" width="1.4" height="1.4"/><rect x="720" y="522.2" width="1.4" height="1.4"/></g>
</g>
</svg>
</div>
</body></html>
